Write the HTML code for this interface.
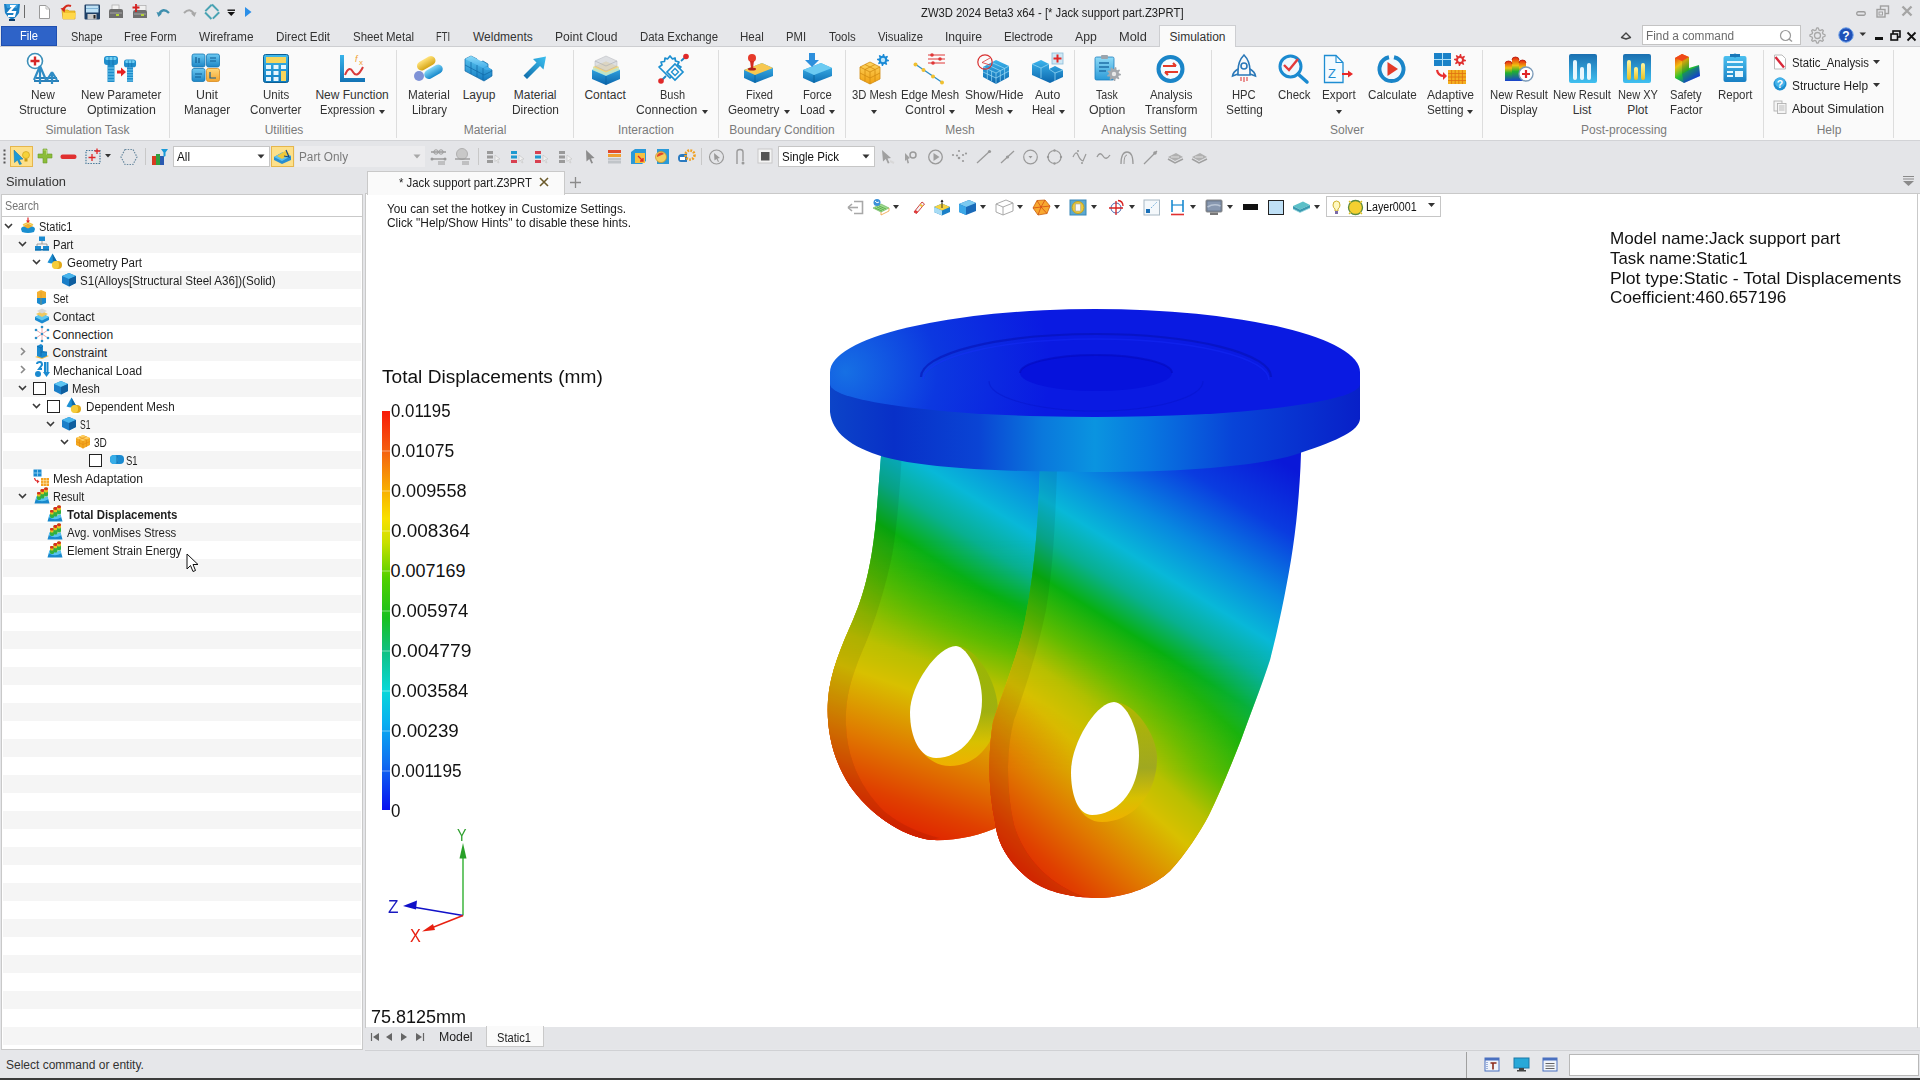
<!DOCTYPE html>
<html><head><meta charset="utf-8"><title>ZW3D</title><style>
*{margin:0;padding:0;box-sizing:border-box}
html,body{width:1920px;height:1080px;overflow:hidden;background:#e6e7ea;font-family:"Liberation Sans",sans-serif;font-size:12px;color:#222}
.a{position:absolute}
.t{position:absolute;white-space:nowrap}
svg.a{overflow:visible}
</style></head><body>
<div class="a" style="left:0px;top:0px;width:1920px;height:46px;background:#e6e7ea;"></div>
<div class="a" style="left:0px;top:46px;width:1920px;height:95px;background:#fafafa;border-top:1px solid #cdced1;border-bottom:1px solid #d2d3d6;"></div>
<div class="a" style="left:0px;top:141px;width:1920px;height:31px;background:#e4e5e8;"></div>
<div class="a" style="left:0px;top:172px;width:1920px;height:877px;background:#e4e5e8;"></div>
<div class="a" style="left:1px;top:216px;width:362px;height:834px;background:#fff;border:1px solid #c9c9c9;"></div>
<div class="a" style="left:365px;top:193px;width:1555px;height:835px;background:#fff;border-left:1px solid #c9c9c9;border-top:1px solid #c9c9c9;"></div>
<div class="a" style="left:0px;top:1050px;width:1920px;height:28px;background:#e6e7ea;"></div>
<div class="a" style="left:0px;top:1078px;width:1920px;height:2px;background:#3c3c3c;"></div>
<svg class="a" style="left:3px;top:2px;" width="18" height="19" viewBox="0 0 18 19"><path d="M1 2 L17 2 L16 11 Q13 16 9 18 Q5 16 2 11 Z" fill="#1a7fc4"/>
<path d="M3 2 L15 2 L14 6 L4 6Z" fill="#3ba0e0"/>
<path d="M7 4 L11 4 L6 10 L12 10 L11 14 L5 14" fill="none" stroke="#fff" stroke-width="2.2"/>
<rect x="6" y="17" width="6" height="2" fill="#0b3d6b"/></svg>
<div class="a" style="left:24px;top:5px;width:1px;height:13px;background:#6a6a6a;"></div>
<svg class="a" style="left:38px;top:4px;" width="13" height="16" viewBox="0 0 13 16"><path d="M1.5 1.5 H8 L11.5 5 V14.5 H1.5Z" fill="#fff" stroke="#9a9a9a"/><path d="M8 1.5 V5 H11.5" fill="none" stroke="#bbb"/></svg>
<svg class="a" style="left:60px;top:3px;" width="18" height="17" viewBox="0 0 18 17"><path d="M2 7 H8 L9 8 H15 V16 H3Z" fill="#f2c12e" stroke="#d9a520" stroke-width="0.8"/><path d="M3 10 H16 L14.5 16 H3Z" fill="#ffd84a"/><path d="M11 3 Q6 1 3 7" fill="none" stroke="#d42b1e" stroke-width="2"/><path d="M0.5 5.5 L4.5 9.5 L5.5 4Z" fill="#d42b1e"/></svg>
<svg class="a" style="left:84px;top:4px;" width="17" height="16" viewBox="0 0 17 16"><rect x="0.5" y="0.5" width="15.5" height="15" rx="1" fill="#1d3f66"/><rect x="2" y="1.5" width="12.5" height="7" fill="#bde0f5"/><rect x="2" y="4" width="12.5" height="1" fill="#7fb3d6"/><rect x="3.5" y="10" width="9" height="5.5" fill="#c9c9c9"/><rect x="9.5" y="11" width="2" height="3.5" fill="#222"/></svg>
<svg class="a" style="left:108px;top:4px;" width="16" height="16" viewBox="0 0 16 16"><rect x="4" y="1" width="7" height="5" fill="#f2f2f2" stroke="#aaa" stroke-width="0.7"/><path d="M1 7 Q1 5 3 5 H13 Q15 5 15 7 V14 H1Z" fill="#6f6f6f"/><rect x="2" y="8" width="12" height="2" fill="#8a8a8a"/><rect x="8" y="10" width="3" height="2" fill="#b6d43a"/></svg>
<svg class="a" style="left:132px;top:4px;" width="16" height="16" viewBox="0 0 16 16"><rect x="5" y="1.5" width="9" height="5" fill="#f0f0f0" stroke="#aaa" stroke-width="0.7"/><path d="M1 8 Q1 6 3 6 H13 Q15 6 15 8 V14 H1Z" fill="#6f6f6f"/><rect x="2" y="9" width="12" height="2" fill="#8a8a8a"/><rect x="9" y="10" width="3" height="2" fill="#b6d43a"/><path d="M4 0 V8 M0.5 3.5 H7.5" stroke="#d52020" stroke-width="1.8"/></svg>
<svg class="a" style="left:156px;top:6px;" width="16" height="12" viewBox="0 0 16 12"><path d="M3 8 Q7 1 13 7" fill="none" stroke="#3f8fae" stroke-width="2.3"/><path d="M0.5 6 L6 7.5 L2.5 11Z" fill="#3f8fae"/></svg>
<svg class="a" style="left:181px;top:6px;" width="16" height="12" viewBox="0 0 16 12"><path d="M13 8 Q9 1 3 7" fill="none" stroke="#a8a8a8" stroke-width="2"/><path d="M15.5 6 L10 7.5 L13.5 11Z" fill="#a8a8a8"/></svg>
<svg class="a" style="left:203px;top:3px;" width="18" height="18" viewBox="0 0 18 18"><path d="M9 1.5 L16.5 9 L9 16.5 L1.5 9Z" fill="none" stroke="#4aa3b3" stroke-width="2" stroke-dasharray="9 2"/></svg>
<svg class="a" style="left:227px;top:9px;" width="9" height="8" viewBox="0 0 9 8"><rect x="0.5" y="0.5" width="7.5" height="1.4" fill="#111"/><path d="M0.5 3 H8 L4.25 7Z" fill="#111"/></svg>
<svg class="a" style="left:244px;top:6px;" width="8" height="12" viewBox="0 0 8 12"><path d="M1 1 L7.5 6 L1 11Z" fill="#2b8fe8"/></svg>
<div class="t" style="left:920.5px;top:5.8px;font-size:12px;line-height:14px;color:#222;transform:scaleX(0.938);transform-origin:0 0;">ZW3D 2024 Beta3 x64 - [* Jack support part.Z3PRT]</div>
<svg class="a" style="left:1856px;top:11px;" width="11" height="6" viewBox="0 0 11 6"><rect x="0.75" y="0.75" width="8.5" height="3.5" rx="1.5" fill="none" stroke="#9c9c9c" stroke-width="1.3"/></svg>
<svg class="a" style="left:1876px;top:5px;" width="14" height="13" viewBox="0 0 14 13"><rect x="4.5" y="1" width="8" height="7.5" fill="none" stroke="#a0a0a0" stroke-width="1.4"/><rect x="1" y="4.5" width="8" height="7.5" fill="#e6e7ea" stroke="#a0a0a0" stroke-width="1.4"/><rect x="3" y="7" width="3.5" height="3" fill="none" stroke="#a0a0a0"/></svg>
<svg class="a" style="left:1901px;top:5px;" width="12" height="12" viewBox="0 0 12 12"><path d="M1.5 1.5 L10.5 10.5 M10.5 1.5 L1.5 10.5" stroke="#a5a5a5" stroke-width="2.4"/></svg>
<div class="a" style="left:1px;top:26px;width:56px;height:20px;background:#2e63c8;border:1px solid #1f4fb0;"></div>
<div class="t" style="left:19.5px;top:28.8px;font-size:12px;line-height:14px;color:#ffffff;transform:scaleX(0.931);transform-origin:0 0;">File</div>
<div class="a" style="left:1159px;top:25px;width:77px;height:22px;background:#fafafa;border:1px solid #cdced1;border-bottom:none;"></div>
<div class="t" style="left:70.5px;top:29.8px;font-size:12px;line-height:14px;color:#333;transform:scaleX(0.908);transform-origin:0 0;">Shape</div>
<div class="t" style="left:124.0px;top:29.8px;font-size:12px;line-height:14px;color:#333;transform:scaleX(0.938);transform-origin:0 0;">Free Form</div>
<div class="t" style="left:199.0px;top:29.8px;font-size:12px;line-height:14px;color:#333;transform:scaleX(0.985);transform-origin:0 0;">Wireframe</div>
<div class="t" style="left:276.0px;top:29.8px;font-size:12px;line-height:14px;color:#333;transform:scaleX(0.976);transform-origin:0 0;">Direct Edit</div>
<div class="t" style="left:352.5px;top:29.8px;font-size:12px;line-height:14px;color:#333;transform:scaleX(0.953);transform-origin:0 0;">Sheet Metal</div>
<div class="t" style="left:436.0px;top:29.8px;font-size:12px;line-height:14px;color:#333;transform:scaleX(0.778);transform-origin:0 0;">FTI</div>
<div class="t" style="left:473.0px;top:29.8px;font-size:12px;line-height:14px;color:#333;">Weldments</div>
<div class="t" style="left:555.0px;top:29.8px;font-size:12px;line-height:14px;color:#333;transform:scaleX(1.008);transform-origin:0 0;">Point Cloud</div>
<div class="t" style="left:640.0px;top:29.8px;font-size:12px;line-height:14px;color:#333;transform:scaleX(0.951);transform-origin:0 0;">Data Exchange</div>
<div class="t" style="left:740.0px;top:29.8px;font-size:12px;line-height:14px;color:#333;transform:scaleX(0.962);transform-origin:0 0;">Heal</div>
<div class="t" style="left:786.0px;top:29.8px;font-size:12px;line-height:14px;color:#333;transform:scaleX(0.938);transform-origin:0 0;">PMI</div>
<div class="t" style="left:829.0px;top:29.8px;font-size:12px;line-height:14px;color:#333;transform:scaleX(0.955);transform-origin:0 0;">Tools</div>
<div class="t" style="left:878.0px;top:29.8px;font-size:12px;line-height:14px;color:#333;transform:scaleX(0.941);transform-origin:0 0;">Visualize</div>
<div class="t" style="left:945.0px;top:29.8px;font-size:12px;line-height:14px;color:#333;transform:scaleX(1.009);transform-origin:0 0;">Inquire</div>
<div class="t" style="left:1004.0px;top:29.8px;font-size:12px;line-height:14px;color:#333;transform:scaleX(0.967);transform-origin:0 0;">Electrode</div>
<div class="t" style="left:1075.0px;top:29.8px;font-size:12px;line-height:14px;color:#333;transform:scaleX(1.019);transform-origin:0 0;">App</div>
<div class="t" style="left:1119.0px;top:29.8px;font-size:12px;line-height:14px;color:#333;transform:scaleX(1.067);transform-origin:0 0;">Mold</div>
<div class="t" style="left:1169.5px;top:29.8px;font-size:12px;line-height:14px;color:#333;">Simulation</div>
<svg class="a" style="left:1620px;top:31px;" width="12" height="9" viewBox="0 0 12 9"><path d="M1.5 6.5 L6 2 L10.5 6.5 L6 8Z" fill="none" stroke="#444" stroke-width="1.4" stroke-linejoin="round"/></svg>
<div class="a" style="left:1642px;top:25px;width:159px;height:20px;background:#fff;border:1px solid #c4c4c4;"></div>
<div class="t" style="left:1645.5px;top:28.8px;font-size:12px;line-height:14px;color:#6b6b6b;transform:scaleX(0.985);transform-origin:0 0;">Find a command</div>
<svg class="a" style="left:1779px;top:29px;" width="15" height="14" viewBox="0 0 15 14"><circle cx="6.5" cy="6.5" r="5" fill="none" stroke="#9a9a9a" stroke-width="1.2"/><path d="M10 10 L13 12.5" stroke="#9a9a9a" stroke-width="1.5"/></svg>
<svg class="a" style="left:1809px;top:27px;" width="18" height="17" viewBox="0 0 18 17"><polygon points="16.06,7.76 16.06,9.24 13.86,10.13 13.44,11.14 14.37,13.32 13.32,14.37 11.14,13.44 10.13,13.86 9.24,16.06 7.76,16.06 6.87,13.86 5.86,13.44 3.68,14.37 2.63,13.32 3.56,11.14 3.14,10.13 0.94,9.24 0.94,7.76 3.14,6.87 3.56,5.86 2.63,3.68 3.68,2.63 5.86,3.56 6.87,3.14 7.76,0.94 9.24,0.94 10.13,3.14 11.14,3.56 13.32,2.63 14.37,3.68 13.44,5.86 13.86,6.87" fill="none" stroke="#a8a8a8" stroke-width="1.3" stroke-linejoin="round"/><circle cx="8.5" cy="8.5" r="3" fill="none" stroke="#a8a8a8" stroke-width="1.3"/></svg>
<svg class="a" style="left:1838px;top:27px;" width="17" height="16" viewBox="0 0 17 16"><circle cx="8" cy="8" r="7.2" fill="#2051b8" stroke="#6a9ee8" stroke-width="1"/><text x="8" y="12.5" font-size="12" font-weight="bold" fill="#fff" text-anchor="middle" font-family="Liberation Sans">?</text></svg>
<svg class="a" style="left:1859px;top:32px;" width="8" height="5" viewBox="0 0 8 5"><path d="M0.5 0.5 H7 L3.75 4Z" fill="#333"/></svg>
<div class="a" style="left:1875px;top:37px;width:8px;height:3px;background:#111;"></div>
<svg class="a" style="left:1890px;top:30px;" width="11" height="11" viewBox="0 0 11 11"><rect x="3" y="1" width="7" height="6" fill="none" stroke="#111" stroke-width="1.6"/><rect x="1" y="4" width="6.5" height="6" fill="#e6e7ea" stroke="#111" stroke-width="1.6"/></svg>
<svg class="a" style="left:1906px;top:31px;" width="11" height="11" viewBox="0 0 11 11"><path d="M1.5 1.5 L9.5 9.5 M9.5 1.5 L1.5 9.5" stroke="#111" stroke-width="1.8"/></svg>
<div class="a" style="left:169px;top:50px;width:1px;height:88px;background:#dddddd;"></div>
<div class="a" style="left:396px;top:50px;width:1px;height:88px;background:#dddddd;"></div>
<div class="a" style="left:573px;top:50px;width:1px;height:88px;background:#dddddd;"></div>
<div class="a" style="left:718px;top:50px;width:1px;height:88px;background:#dddddd;"></div>
<div class="a" style="left:845px;top:50px;width:1px;height:88px;background:#dddddd;"></div>
<div class="a" style="left:1074px;top:50px;width:1px;height:88px;background:#dddddd;"></div>
<div class="a" style="left:1211px;top:50px;width:1px;height:88px;background:#dddddd;"></div>
<div class="a" style="left:1482px;top:50px;width:1px;height:88px;background:#dddddd;"></div>
<div class="a" style="left:1763px;top:50px;width:1px;height:88px;background:#dddddd;"></div>
<div class="a" style="left:1893px;top:50px;width:1px;height:88px;background:#dddddd;"></div>
<div class="t" style="left:31.1px;top:87.8px;font-size:12px;line-height:14px;color:#333;transform:scaleX(0.989);transform-origin:0 0;">New</div>
<div class="t" style="left:19.2px;top:102.8px;font-size:12px;line-height:14px;color:#333;transform:scaleX(0.976);transform-origin:0 0;">Structure</div>
<div class="t" style="left:80.9px;top:87.8px;font-size:12px;line-height:14px;color:#333;transform:scaleX(0.963);transform-origin:0 0;">New Parameter</div>
<div class="t" style="left:86.6px;top:102.8px;font-size:12px;line-height:14px;color:#333;transform:scaleX(1.031);transform-origin:0 0;">Optimization</div>
<div class="t" style="left:196.0px;top:87.8px;font-size:12px;line-height:14px;color:#333;transform:scaleX(1.031);transform-origin:0 0;">Unit</div>
<div class="t" style="left:183.9px;top:102.8px;font-size:12px;line-height:14px;color:#333;transform:scaleX(0.977);transform-origin:0 0;">Manager</div>
<div class="t" style="left:262.9px;top:87.8px;font-size:12px;line-height:14px;color:#333;transform:scaleX(0.960);transform-origin:0 0;">Units</div>
<div class="t" style="left:250.4px;top:102.8px;font-size:12px;line-height:14px;color:#333;transform:scaleX(0.973);transform-origin:0 0;">Converter</div>
<div class="t" style="left:315.4px;top:87.8px;font-size:12px;line-height:14px;color:#333;">New Function</div>
<div class="t" style="left:319.5px;top:102.8px;font-size:12px;line-height:14px;color:#333;transform:scaleX(0.927);transform-origin:0 0;">Expression</div>
<svg class="a" style="left:378.5px;top:110px;" width="6" height="4" viewBox="0 0 6 4"><path d="M0 0 H6 L3 4Z" fill="#333"/></svg>
<div class="t" style="left:408.1px;top:87.8px;font-size:12px;line-height:14px;color:#333;transform:scaleX(0.978);transform-origin:0 0;">Material</div>
<div class="t" style="left:411.5px;top:102.8px;font-size:12px;line-height:14px;color:#333;transform:scaleX(0.954);transform-origin:0 0;">Library</div>
<div class="t" style="left:462.7px;top:87.8px;font-size:12px;line-height:14px;color:#333;">Layup</div>
<div class="t" style="left:513.8px;top:87.8px;font-size:12px;line-height:14px;color:#333;">Material</div>
<div class="t" style="left:511.5px;top:102.8px;font-size:12px;line-height:14px;color:#333;transform:scaleX(0.992);transform-origin:0 0;">Direction</div>
<div class="t" style="left:584.4px;top:87.8px;font-size:12px;line-height:14px;color:#333;">Contact</div>
<div class="t" style="left:659.5px;top:87.8px;font-size:12px;line-height:14px;color:#333;transform:scaleX(0.914);transform-origin:0 0;">Bush</div>
<div class="t" style="left:636.4px;top:102.8px;font-size:12px;line-height:14px;color:#333;transform:scaleX(1.009);transform-origin:0 0;">Connection</div>
<svg class="a" style="left:701.625px;top:110px;" width="6" height="4" viewBox="0 0 6 4"><path d="M0 0 H6 L3 4Z" fill="#333"/></svg>
<div class="t" style="left:745.5px;top:87.8px;font-size:12px;line-height:14px;color:#333;transform:scaleX(0.920);transform-origin:0 0;">Fixed</div>
<div class="t" style="left:728.4px;top:102.8px;font-size:12px;line-height:14px;color:#333;transform:scaleX(0.973);transform-origin:0 0;">Geometry</div>
<svg class="a" style="left:783.625px;top:110px;" width="6" height="4" viewBox="0 0 6 4"><path d="M0 0 H6 L3 4Z" fill="#333"/></svg>
<div class="t" style="left:802.6px;top:87.8px;font-size:12px;line-height:14px;color:#333;transform:scaleX(0.937);transform-origin:0 0;">Force</div>
<div class="t" style="left:799.5px;top:102.8px;font-size:12px;line-height:14px;color:#333;transform:scaleX(0.937);transform-origin:0 0;">Load</div>
<svg class="a" style="left:828.5px;top:110px;" width="6" height="4" viewBox="0 0 6 4"><path d="M0 0 H6 L3 4Z" fill="#333"/></svg>
<div class="t" style="left:851.5px;top:87.8px;font-size:12px;line-height:14px;color:#333;transform:scaleX(0.937);transform-origin:0 0;">3D Mesh</div>
<svg class="a" style="left:871px;top:110px;" width="6" height="4" viewBox="0 0 6 4"><path d="M0 0 H6 L3 4Z" fill="#333"/></svg>
<div class="t" style="left:901.0px;top:87.8px;font-size:12px;line-height:14px;color:#333;transform:scaleX(0.956);transform-origin:0 0;">Edge Mesh</div>
<div class="t" style="left:905.0px;top:102.8px;font-size:12px;line-height:14px;color:#333;transform:scaleX(1.034);transform-origin:0 0;">Control</div>
<svg class="a" style="left:949.0px;top:110px;" width="6" height="4" viewBox="0 0 6 4"><path d="M0 0 H6 L3 4Z" fill="#333"/></svg>
<div class="t" style="left:964.8px;top:87.8px;font-size:12px;line-height:14px;color:#333;transform:scaleX(1.008);transform-origin:0 0;">Show/Hide</div>
<div class="t" style="left:974.9px;top:102.8px;font-size:12px;line-height:14px;color:#333;transform:scaleX(0.963);transform-origin:0 0;">Mesh</div>
<svg class="a" style="left:1007.125px;top:110px;" width="6" height="4" viewBox="0 0 6 4"><path d="M0 0 H6 L3 4Z" fill="#333"/></svg>
<div class="t" style="left:1035.4px;top:87.8px;font-size:12px;line-height:14px;color:#333;transform:scaleX(1.023);transform-origin:0 0;">Auto</div>
<div class="t" style="left:1031.5px;top:102.8px;font-size:12px;line-height:14px;color:#333;transform:scaleX(0.932);transform-origin:0 0;">Heal</div>
<svg class="a" style="left:1058.5px;top:110px;" width="6" height="4" viewBox="0 0 6 4"><path d="M0 0 H6 L3 4Z" fill="#333"/></svg>
<div class="t" style="left:1096.1px;top:87.8px;font-size:12px;line-height:14px;color:#333;transform:scaleX(0.882);transform-origin:0 0;">Task</div>
<div class="t" style="left:1088.9px;top:102.8px;font-size:12px;line-height:14px;color:#333;transform:scaleX(1.026);transform-origin:0 0;">Option</div>
<div class="t" style="left:1149.8px;top:87.8px;font-size:12px;line-height:14px;color:#333;transform:scaleX(0.951);transform-origin:0 0;">Analysis</div>
<div class="t" style="left:1144.8px;top:102.8px;font-size:12px;line-height:14px;color:#333;transform:scaleX(0.968);transform-origin:0 0;">Transform</div>
<div class="t" style="left:1232.1px;top:87.8px;font-size:12px;line-height:14px;color:#333;transform:scaleX(0.937);transform-origin:0 0;">HPC</div>
<div class="t" style="left:1225.6px;top:102.8px;font-size:12px;line-height:14px;color:#333;transform:scaleX(0.984);transform-origin:0 0;">Setting</div>
<div class="t" style="left:1277.8px;top:87.8px;font-size:12px;line-height:14px;color:#333;transform:scaleX(0.955);transform-origin:0 0;">Check</div>
<div class="t" style="left:1322.1px;top:87.8px;font-size:12px;line-height:14px;color:#333;transform:scaleX(0.973);transform-origin:0 0;">Export</div>
<svg class="a" style="left:1336px;top:110px;" width="6" height="4" viewBox="0 0 6 4"><path d="M0 0 H6 L3 4Z" fill="#333"/></svg>
<div class="t" style="left:1367.6px;top:87.8px;font-size:12px;line-height:14px;color:#333;transform:scaleX(0.974);transform-origin:0 0;">Calculate</div>
<div class="t" style="left:1426.5px;top:87.8px;font-size:12px;line-height:14px;color:#333;transform:scaleX(1.007);transform-origin:0 0;">Adaptive</div>
<div class="t" style="left:1426.8px;top:102.8px;font-size:12px;line-height:14px;color:#333;transform:scaleX(0.977);transform-origin:0 0;">Setting</div>
<svg class="a" style="left:1467.25px;top:110px;" width="6" height="4" viewBox="0 0 6 4"><path d="M0 0 H6 L3 4Z" fill="#333"/></svg>
<div class="t" style="left:1490.0px;top:87.8px;font-size:12px;line-height:14px;color:#333;transform:scaleX(0.945);transform-origin:0 0;">New Result</div>
<div class="t" style="left:1500.2px;top:102.8px;font-size:12px;line-height:14px;color:#333;transform:scaleX(0.953);transform-origin:0 0;">Display</div>
<div class="t" style="left:1553.0px;top:87.8px;font-size:12px;line-height:14px;color:#333;transform:scaleX(0.945);transform-origin:0 0;">New Result</div>
<div class="t" style="left:1572.7px;top:102.8px;font-size:12px;line-height:14px;color:#333;">List</div>
<div class="t" style="left:1617.5px;top:87.8px;font-size:12px;line-height:14px;color:#333;transform:scaleX(0.923);transform-origin:0 0;">New XY</div>
<div class="t" style="left:1627.2px;top:102.8px;font-size:12px;line-height:14px;color:#333;">Plot</div>
<div class="t" style="left:1670.2px;top:87.8px;font-size:12px;line-height:14px;color:#333;transform:scaleX(0.926);transform-origin:0 0;">Safety</div>
<div class="t" style="left:1669.8px;top:102.8px;font-size:12px;line-height:14px;color:#333;transform:scaleX(0.956);transform-origin:0 0;">Factor</div>
<div class="t" style="left:1717.8px;top:87.8px;font-size:12px;line-height:14px;color:#333;transform:scaleX(0.958);transform-origin:0 0;">Report</div>
<div class="t" style="left:45.6px;top:122.8px;font-size:12px;line-height:14px;color:#7b7b7b;">Simulation Task</div>
<div class="t" style="left:264.7px;top:122.8px;font-size:12px;line-height:14px;color:#7b7b7b;">Utilities</div>
<div class="t" style="left:463.7px;top:122.8px;font-size:12px;line-height:14px;color:#7b7b7b;">Material</div>
<div class="t" style="left:618.0px;top:122.8px;font-size:12px;line-height:14px;color:#7b7b7b;">Interaction</div>
<div class="t" style="left:729.3px;top:122.8px;font-size:12px;line-height:14px;color:#7b7b7b;">Boundary Condition</div>
<div class="t" style="left:945.3px;top:122.8px;font-size:12px;line-height:14px;color:#7b7b7b;">Mesh</div>
<div class="t" style="left:1101.3px;top:122.8px;font-size:12px;line-height:14px;color:#7b7b7b;">Analysis Setting</div>
<div class="t" style="left:1330.0px;top:122.8px;font-size:12px;line-height:14px;color:#7b7b7b;">Solver</div>
<div class="t" style="left:1581.0px;top:122.8px;font-size:12px;line-height:14px;color:#7b7b7b;">Post-processing</div>
<div class="t" style="left:1816.7px;top:122.8px;font-size:12px;line-height:14px;color:#7b7b7b;">Help</div>
<svg class="a" style="left:1773px;top:54px;" width="14" height="16" viewBox="0 0 14 16"><path d="M1.5 1 H9 L12.5 4.5 V15 H1.5Z" fill="#fff" stroke="#bbb"/><path d="M2.5 3 L11 13.5" stroke="#d8283a" stroke-width="2.4"/></svg>
<div class="t" style="left:1792.0px;top:55.8px;font-size:12px;line-height:14px;color:#222;transform:scaleX(0.946);transform-origin:0 0;">Static_Analysis</div>
<svg class="a" style="left:1873px;top:60px;" width="7" height="4" viewBox="0 0 7 4"><path d="M0 0 H7 L3.5 4Z" fill="#333"/></svg>
<svg class="a" style="left:1773px;top:77px;" width="14" height="14" viewBox="0 0 14 14"><circle cx="7" cy="7" r="6.5" fill="#1e8fd0"/><circle cx="7" cy="5.5" r="5" fill="#45b3ea"/><text x="7" y="11" font-size="10.5" font-weight="bold" fill="#fff" text-anchor="middle" font-family="Liberation Sans">?</text></svg>
<div class="t" style="left:1792.0px;top:78.8px;font-size:12px;line-height:14px;color:#222;transform:scaleX(0.991);transform-origin:0 0;">Structure Help</div>
<svg class="a" style="left:1873px;top:83px;" width="7" height="4" viewBox="0 0 7 4"><path d="M0 0 H7 L3.5 4Z" fill="#333"/></svg>
<svg class="a" style="left:1773px;top:100px;" width="14" height="14" viewBox="0 0 14 14"><rect x="1" y="1" width="8" height="10" fill="#f4f4f4" stroke="#aaa" stroke-width="0.8"/><rect x="4.5" y="3.5" width="8.5" height="10" fill="#f4f4f4" stroke="#aaa" stroke-width="0.8"/><path d="M6 6 H11.5 M6 8 H11.5 M6 10 H11.5" stroke="#bbb"/></svg>
<div class="t" style="left:1792.0px;top:101.8px;font-size:12px;line-height:14px;color:#222;transform:scaleX(1.014);transform-origin:0 0;">About Simulation</div>
<svg class="a" style="left:26px;top:52px;" width="36" height="34" viewBox="0 0 36 34"><circle cx="9" cy="9" r="7.5" fill="#fff" stroke="#3d8fb8" stroke-width="1.6"/>
<path d="M9 4.5 V13.5 M4.5 9 H13.5" stroke="#d62828" stroke-width="2.4"/>
<path d="M8 29 L33 29 M10 26 L31 26" stroke="#2a7fb8" stroke-width="2"/>
<path d="M14 14 V32 M26 20 V32 M14 14 L8 28 M14 14 L20 28 M26 20 L21 28 M26 20 L31 28" stroke="#2f8cc4" stroke-width="2.2" fill="none"/></svg>
<svg class="a" style="left:104px;top:55px;" width="34" height="28" viewBox="0 0 34 28"><g transform="translate(0,1) scale(1)"><rect x="0" y="0" width="14" height="9" rx="3" fill="#1f8dcb"/><rect x="1.5" y="1" width="11" height="3" rx="1.5" fill="#6fd0f5"/><path d="M5 1 V9 M9 1 V9" stroke="#0f6aa8" stroke-width="0.7"/>
<rect x="3.5" y="9" width="7" height="17" fill="#1f8dcb"/><path d="M3.5 12 H10.5 M3.5 15 H10.5 M3.5 18 H10.5 M3.5 21 H10.5 M3.5 24 H10.5" stroke="#7fd3f3" stroke-width="0.9"/></g><g transform="translate(20,4.5) scale(0.86)"><rect x="0" y="0" width="14" height="9" rx="3" fill="#1f8dcb"/><rect x="1.5" y="1" width="11" height="3" rx="1.5" fill="#6fd0f5"/><path d="M5 1 V9 M9 1 V9" stroke="#0f6aa8" stroke-width="0.7"/>
<rect x="3.5" y="9" width="7" height="17" fill="#1f8dcb"/><path d="M3.5 12 H10.5 M3.5 15 H10.5 M3.5 18 H10.5 M3.5 21 H10.5 M3.5 24 H10.5" stroke="#7fd3f3" stroke-width="0.9"/></g><path d="M13 17 H18" stroke="#e82020" stroke-width="3"/><path d="M17 12.5 L22 17 L17 21.5Z" fill="#e82020"/></svg>
<svg class="a" style="left:191px;top:53px;" width="30" height="30" viewBox="0 0 30 30"><linearGradient id="um1" x1="0" y1="0" x2="0" y2="1"><stop offset="0" stop-color="#6cc9f2"/><stop offset="1" stop-color="#1d86c6"/></linearGradient><linearGradient id="um2" x1="0" y1="0" x2="0" y2="1"><stop offset="0" stop-color="#ffd87a"/><stop offset="1" stop-color="#f2a530"/></linearGradient>
<rect x="1" y="1" width="13" height="13" rx="2" fill="url(#um1)" stroke="#1577b3" stroke-width="0.8"/>
<rect x="15.5" y="1" width="13" height="13" rx="2" fill="url(#um1)" stroke="#1577b3" stroke-width="0.8"/>
<rect x="1" y="15.5" width="13" height="13" rx="2" fill="url(#um1)" stroke="#1577b3" stroke-width="0.8"/>
<rect x="15.5" y="15.5" width="13" height="13" rx="2" fill="url(#um2)" stroke="#d98a1c" stroke-width="0.8"/>
<path d="M5 4 V10 M8 5 V10 M19 5 H25 M19 8 H25 M4 21 H11 M4 24 H10 M19 19 V25 H25" stroke="#0f5d93" stroke-width="1.2" fill="none"/></svg>
<svg class="a" style="left:263px;top:54px;" width="27" height="30" viewBox="0 0 27 30"><linearGradient id="uc" x1="0" y1="0" x2="0" y2="1"><stop offset="0" stop-color="#40b8ea"/><stop offset="1" stop-color="#0f7cc0"/></linearGradient><rect x="0.5" y="0.5" width="25" height="28" rx="2" fill="url(#uc)" stroke="#0b5f95"/>
<rect x="3" y="3" width="20" height="6" fill="#f6d55c"/>
<g fill="#e6f6fd"><rect x="3" y="11" width="5" height="4"/><rect x="10.5" y="11" width="5" height="4"/><rect x="18" y="11" width="5" height="4"/>
<rect x="3" y="17" width="5" height="4"/><rect x="10.5" y="17" width="5" height="4"/><rect x="3" y="23" width="5" height="4"/><rect x="10.5" y="23" width="5" height="4"/></g>
<rect x="18" y="17" width="5" height="10" fill="#f6d55c"/></svg>
<svg class="a" style="left:339px;top:53px;" width="28" height="30" viewBox="0 0 28 30"><linearGradient id="nf" x1="0" y1="0" x2="0" y2="1"><stop offset="0" stop-color="#38b3ea"/><stop offset="1" stop-color="#1273b5"/></linearGradient><path d="M1 27 H26 V29 H1Z" fill="#59c4f0"/><path d="M1 2 H5 V25 H26 V29 H1Z" fill="url(#nf)"/>
<path d="M6 22 Q10 12 14 19 Q18 26 24 14" fill="none" stroke="#d83a3a" stroke-width="2"/>
<text x="16" y="9" font-size="9" fill="#f0a030" font-family="Liberation Sans" font-style="italic">f</text><text x="20" y="12" font-size="8" fill="#f0a030" font-family="Liberation Sans">x</text></svg>
<svg class="a" style="left:413px;top:55px;" width="32" height="27" viewBox="0 0 32 27"><linearGradient id="ml1" x1="0" y1="0" x2="0" y2="1"><stop offset="0" stop-color="#ffe27a"/><stop offset="1" stop-color="#d6a514"/></linearGradient><linearGradient id="ml2" x1="0" y1="0" x2="0" y2="1"><stop offset="0" stop-color="#7fd6f7"/><stop offset="1" stop-color="#1688cb"/></linearGradient>
<g transform="rotate(-30 16 13)"><rect x="6" y="3" width="20" height="9" rx="4.5" fill="url(#ml1)"/><rect x="8" y="14" width="20" height="9" rx="4.5" fill="url(#ml2)"/></g>
<circle cx="6" cy="21" r="5" fill="#7e92d6"/></svg>
<svg class="a" style="left:464px;top:54px;" width="30" height="28" viewBox="0 0 30 28"><linearGradient id="ly" x1="0" y1="0" x2="0" y2="1"><stop offset="0" stop-color="#5cc8f2"/><stop offset="1" stop-color="#137ac0"/></linearGradient><linearGradient id="lyt" x1="0" y1="0" x2="0" y2="1"><stop offset="0" stop-color="#8adaf8"/><stop offset="1" stop-color="#3aa8e8"/></linearGradient>
<path d="M1 5 L7 2 L13 5 V9 L19 7 L24 10 V14 L28 16 V22 L20 27 L1 17Z" fill="url(#ly)" stroke="#0e65a3" stroke-width="0.7"/>
<path d="M1 5 L7 8 L13 5 L7 2Z M7 8 L13 11 L19 8 L13 5Z M13 11 L19 14 L24 11 L19 8Z M19 14 L22 16 L28 16 L24 13Z" fill="url(#lyt)"/>
<path d="M7 8 V20 M13 11 V23 M19 14 V26 M1 11 L20 21 L28 17" stroke="#0e65a3" stroke-width="0.7" fill="none"/></svg>
<svg class="a" style="left:522px;top:55px;" width="26" height="26" viewBox="0 0 26 26"><linearGradient id="md" x1="0" y1="1" x2="1" y2="0"><stop offset="0" stop-color="#0f6aa8"/><stop offset="1" stop-color="#3cc0f0"/></linearGradient><path d="M1.5 20.5 L14.5 7.5 L11 4 L24 1.5 L21.5 14.5 L18 11 L5 24Z" fill="url(#md)"/></svg>
<svg class="a" style="left:590px;top:53px;" width="32" height="32" viewBox="0 0 32 32"><linearGradient id="ct1" x1="0" y1="0" x2="0" y2="1"><stop offset="0" stop-color="#3cb4ec"/><stop offset="1" stop-color="#0b66ad"/></linearGradient><path d="M2 17 L16 11 L30 17 V26 L16 32 L2 26Z" fill="url(#ct1)"/><path d="M2 17 L16 23 L30 17 L16 11Z" fill="#7ed6f7"/><path d="M16 23 V32" stroke="#0a5a98" stroke-width="0.6"/>
<path d="M3 14 L16 8.5 L29 14 V17 L16 22.5 L3 17Z" fill="#c8e4c0" opacity="0.9"/><path d="M3 14 L16 19.5 L29 14 L16 8.5Z" fill="#f6d47a"/>
<path d="M5 8 L16 3 L27 8 V13 L16 18 L5 13Z" fill="#d4d6da" opacity="0.75" stroke="#a8abb2" stroke-width="0.6"/><path d="M5 8 L16 13 L27 8" fill="none" stroke="#a8abb2" stroke-width="0.6"/></svg>
<svg class="a" style="left:656px;top:53px;" width="34" height="32" viewBox="0 0 34 32"><path d="M5 28 L10 23 M25 8 L30 3.5" stroke="#1c86c6" stroke-width="1.8"/><circle cx="5" cy="28" r="2.8" fill="#e02828"/><circle cx="30" cy="3.5" r="2.8" fill="#e02828"/>
<path d="M14 3 L16.5 6 L19 5 L19.5 8 L23 9 L21.5 12 L25 14 L14 25 L3 14 L6 12 L5 9 L8.5 8.5 L9 5 L11.5 6Z" fill="none" stroke="#1c8fd0" stroke-width="1.7" stroke-linejoin="round"/>
<path d="M19 11 L27 19 L19 27 L11 19Z" fill="#fafafa" stroke="#1c8fd0" stroke-width="1.7"/><path d="M19 15.5 L22.5 19 L19 22.5 L15.5 19Z" fill="none" stroke="#1c8fd0" stroke-width="1.3"/></svg>
<svg class="a" style="left:743px;top:53px;" width="31" height="29" viewBox="0 0 31 29"><linearGradient id="fg" x1="0" y1="0" x2="0" y2="1"><stop offset="0" stop-color="#43b9ee"/><stop offset="1" stop-color="#0d6fb5"/></linearGradient><path d="M1 17 L19 10 L30 15 V23 L12 30 L1 25Z" fill="url(#fg)"/><path d="M1 17 L12 22 L30 15 L19 10Z" fill="#f7c850"/><path d="M12 22 V30" stroke="#0b5f95" stroke-width="0.8"/>
<circle cx="9" cy="5" r="4" fill="#e63a2a"/><path d="M7 8 L11 8 L10 15 L8 15Z" fill="#d42a20"/><ellipse cx="9" cy="16" rx="4" ry="1.5" fill="#b02018"/></svg>
<svg class="a" style="left:802px;top:52px;" width="32" height="30" viewBox="0 0 32 30"><linearGradient id="fl" x1="0" y1="0" x2="0" y2="1"><stop offset="0" stop-color="#43b9ee"/><stop offset="1" stop-color="#0d6fb5"/></linearGradient><path d="M1 18 L19 11 L30 16 V24 L12 31 L1 26Z" fill="url(#fl)"/><path d="M1 18 L12 23 L30 16 L19 11Z" fill="#6ccbf2"/><path d="M12 23 V31" stroke="#0b5f95" stroke-width="0.8"/>
<path d="M7 1 H13 V8 H17 L10 15 L3 8 H7Z" fill="#2d8fdc"/></svg>
<svg class="a" style="left:859px;top:53px;" width="31" height="32" viewBox="0 0 31 32"><linearGradient id="3d" x1="0" y1="0" x2="0" y2="1"><stop offset="0" stop-color="#ffd560"/><stop offset="1" stop-color="#f0a010"/></linearGradient><path d="M1 14 L11 9 L21 14 V26 L11 31 L1 26Z" fill="url(#3d)" stroke="#d08a10" stroke-width="0.8"/>
<path d="M1 14 L11 19 L21 14 M11 19 V31 M1 20 L11 25 L21 20 M6 11.5 L16 16.5 M16 11.5 L6 16.5 M6 16.5 V28.5 M16 16.5 V28.5" stroke="#d08a10" stroke-width="0.8" fill="none"/>
<polygon points="30.00,7.00 29.88,8.17 27.88,8.61 27.49,9.33 28.24,11.24 27.33,11.99 25.61,10.88 24.82,11.12 24.00,13.00 22.83,12.88 22.39,10.88 21.67,10.49 19.76,11.24 19.01,10.33 20.12,8.61 19.88,7.82 18.00,7.00 18.12,5.83 20.12,5.39 20.51,4.67 19.76,2.76 20.67,2.01 22.39,3.12 23.18,2.88 24.00,1.00 25.17,1.12 25.61,3.12 26.33,3.51 28.24,2.76 28.99,3.67 27.88,5.39 28.12,6.18" fill="#1a8ad6"/><circle cx="24" cy="7" r="2.2" fill="#bfe6fa"/></svg>
<svg class="a" style="left:913px;top:53px;" width="33" height="32" viewBox="0 0 33 32"><path d="M2 11 L30 30" stroke="#2d8fc8" stroke-width="1.4"/><g fill="#f0c030"><circle cx="2.5" cy="11.5" r="2"/><circle cx="10.5" cy="17" r="2"/><circle cx="20" cy="23.5" r="2"/><circle cx="29" cy="29.5" r="2"/></g>
<path d="M15 2 H32 M15 6 H32 M15 10 H32" stroke="#e03838" stroke-width="1.2"/><g fill="#e03838"><circle cx="19" cy="2" r="1.8"/><circle cx="27" cy="6" r="1.8"/><circle cx="20" cy="10" r="1.8"/></g></svg>
<svg class="a" style="left:977px;top:53px;" width="33" height="31" viewBox="0 0 33 31"><linearGradient id="sh" x1="0" y1="0" x2="0" y2="1"><stop offset="0" stop-color="#3cb4ec"/><stop offset="1" stop-color="#0b66ad"/></linearGradient><path d="M6 14 L19 7 L32 13 V24 L19 31 L6 24Z" fill="url(#sh)"/>
<path d="M6 14 L19 20 L32 13 M19 20 V31 M6 19 L19 25 L32 18 M10.3 11.7 L23.3 17.7 M14.6 9.4 L27.6 15.4 M10.3 16 V26 M14.6 18 V28 M23.3 17.7 V28.7 M27.6 15.4 V26.4" stroke="#9fdcf7" stroke-width="0.7" fill="none"/>
<circle cx="8" cy="9" r="7.2" fill="none" stroke="#d83030" stroke-width="1.2"/><path d="M13 5 L5 9.5 L13 12" fill="none" stroke="#d83030" stroke-width="0.8"/></svg>
<svg class="a" style="left:1031px;top:52px;" width="34" height="31" viewBox="0 0 34 31"><linearGradient id="ah" x1="0" y1="0" x2="0" y2="1"><stop offset="0" stop-color="#3cb4ec"/><stop offset="1" stop-color="#0b66ad"/></linearGradient><path d="M1 12 L10 8 L18 12 V17 L24 14 L32 18 V25 L19 31 L1 23Z" fill="url(#ah)"/>
<path d="M1 12 L10 16 L18 12 M10 16 V26 M18 17 L24 21 L32 18 M24 21 V29" stroke="#9fdcf7" stroke-width="0.7" fill="none"/>
<rect x="21" y="1" width="11" height="11" fill="#cfe8f5" stroke="#8cbcd8" stroke-width="0.8"/><path d="M26.5 2.5 V10.5 M22.5 6.5 H30.5" stroke="#e02828" stroke-width="2"/></svg>
<svg class="a" style="left:1094px;top:54px;" width="28" height="28" viewBox="0 0 28 28"><linearGradient id="to" x1="0" y1="0" x2="0" y2="1"><stop offset="0" stop-color="#8fdbf7"/><stop offset="1" stop-color="#2a9ad8"/></linearGradient><rect x="1" y="3" width="19" height="23" rx="1.5" fill="url(#to)" stroke="#1b7cbc" stroke-width="0.8"/><rect x="7" y="1" width="7" height="4" rx="1" fill="#9aa4ad"/>
<path d="M5 9 H15 M5 13 H15 M5 17 H12" stroke="#1f6fa8" stroke-width="1.5"/>
<polygon points="27.00,20.00 26.89,21.22 24.70,21.71 24.33,22.50 25.36,24.50 24.50,25.36 22.50,24.33 21.71,24.70 21.22,26.89 20.00,27.00 19.13,24.92 18.29,24.70 16.50,26.06 15.50,25.36 16.17,23.21 15.67,22.50 13.42,22.39 13.11,21.22 15.00,20.00 15.08,19.13 13.42,17.61 13.94,16.50 16.17,16.79 16.79,16.17 16.50,13.94 17.61,13.42 19.13,15.08 20.00,15.00 21.22,13.11 22.39,13.42 22.50,15.67 23.21,16.17 25.36,15.50 26.06,16.50 24.70,18.29 24.92,19.13" fill="#a4a8ad"/><circle cx="20" cy="20" r="2.2" fill="#e8e8e8"/></svg>
<svg class="a" style="left:1156px;top:55px;" width="30" height="29" viewBox="0 0 30 29"><circle cx="14.5" cy="14" r="12" fill="#f4fbff" stroke="#1a85c8" stroke-width="4"/>
<path d="M7 11 H20 M20 11 L17 8 M22 17 H9 M9 17 L12 20" stroke="#e33a2a" stroke-width="2.2" fill="none"/></svg>
<svg class="a" style="left:1230px;top:54px;" width="28" height="29" viewBox="0 0 28 29"><path d="M14 1 Q20 7 20 17 L20 21 H8 V17 Q8 7 14 1Z" fill="none" stroke="#2a78b8" stroke-width="1.6"/><circle cx="14" cy="12" r="3" fill="none" stroke="#2a78b8" stroke-width="1.6"/>
<path d="M8 15 Q3 18 2.5 22 L8 20 M20 15 Q25 18 25.5 22 L20 20" fill="none" stroke="#2a78b8" stroke-width="1.6"/>
<path d="M11 23 V27 M14 23 V28 M17 23 V27" stroke="#e05050" stroke-width="1.2"/></svg>
<svg class="a" style="left:1278px;top:54px;" width="32" height="30" viewBox="0 0 32 30"><circle cx="12.5" cy="12.5" r="10.5" fill="#eef8fd" stroke="#1a8ad0" stroke-width="3"/><path d="M20 20 L29 28" stroke="#1a8ad0" stroke-width="3.5" stroke-linecap="round"/>
<path d="M6 11 L11 16 L20 5" fill="none" stroke="#e33a3a" stroke-width="2.4"/></svg>
<svg class="a" style="left:1323px;top:54px;" width="32" height="30" viewBox="0 0 32 30"><path d="M1.5 1.5 H13 L20 8.5 V28.5 H1.5Z" fill="#f4fbff" stroke="#1e8dd2" stroke-width="1.3"/><path d="M13 1.5 V8.5 H20" fill="none" stroke="#1e8dd2" stroke-width="1.1"/>
<text x="5" y="24" font-size="13" fill="#1e8dd2" font-family="Liberation Sans">Z</text><path d="M19 20 H26" stroke="#e82828" stroke-width="2"/><path d="M25 16.5 L30 20 L25 23.5Z" fill="#e82828"/></svg>
<svg class="a" style="left:1377px;top:55px;" width="30" height="28" viewBox="0 0 30 28"><circle cx="14.5" cy="14" r="12" fill="#f0f9ff"/><path d="M17 2.3 A12 12 0 1 1 12 2.3" fill="none" stroke="#1a85c8" stroke-width="4"/>
<path d="M10.5 7 L21 14 L10.5 21Z" fill="#e33a2a"/></svg>
<svg class="a" style="left:1433px;top:52px;" width="35" height="33" viewBox="0 0 35 33"><rect x="1" y="1" width="17" height="13" fill="#1a82c8"/><path d="M9.5 1 V14 M1 7.5 H18" stroke="#aee0f8" stroke-width="1"/>
<polygon points="33.00,8.00 32.88,9.17 30.70,9.53 30.33,10.22 31.24,12.24 30.33,12.99 28.53,11.70 27.78,11.92 27.00,14.00 25.83,13.88 25.47,11.70 24.78,11.33 22.76,12.24 22.01,11.33 23.30,9.53 23.08,8.78 21.00,8.00 21.12,6.83 23.30,6.47 23.67,5.78 22.76,3.76 23.67,3.01 25.47,4.30 26.22,4.08 27.00,2.00 28.17,2.12 28.53,4.30 29.22,4.67 31.24,3.76 31.99,4.67 30.70,6.47 30.92,7.22" fill="#e03030"/><circle cx="27" cy="8" r="2" fill="#fafafa"/>
<path d="M4 18 Q5 24 11 24" fill="none" stroke="#e83030" stroke-width="2.2"/><path d="M10 20 L14 24 L10 28Z" fill="#e83030"/>
<rect x="15" y="18" width="18" height="14" fill="#f4b020"/><path d="M18.6 18 V32 M22.2 18 V32 M25.8 18 V32 M29.4 18 V32 M15 21.5 H33 M15 25 H33 M15 28.5 H33" stroke="#e07010" stroke-width="0.8"/></svg>
<svg class="a" style="left:1504px;top:55px;" width="30" height="29" viewBox="0 0 30 29"><linearGradient id="nrd" x1="0" y1="0" x2="0" y2="1"><stop offset="0" stop-color="#e82010"/><stop offset="0.35" stop-color="#f0c010"/><stop offset="0.6" stop-color="#20b030"/><stop offset="1" stop-color="#1a40d0"/></linearGradient>
<path d="M1 9 Q1 6 4.5 6 Q8 6 8 9 V26 H1Z" fill="url(#nrd)"/><path d="M8 5 Q8 2 11.5 2 Q15 2 15 5 V26 H8Z" fill="url(#nrd)"/><path d="M15 8 Q15 5 18.5 5 Q22 5 22 8 V26 H15Z" fill="url(#nrd)"/>
<path d="M1 9 Q1 6 4.5 6 Q8 6 8 9 M8 5 Q8 2 11.5 2 Q15 2 15 5 M15 8 Q15 5 18.5 5 Q22 5 22 8" fill="none" stroke="#b01808" stroke-width="0.8"/>
<circle cx="22" cy="19" r="7" fill="#fff" stroke="#7a9ab8" stroke-width="1.3"/><path d="M22 15 V23 M18 19 H26" stroke="#e02828" stroke-width="2.2"/></svg>
<svg class="a" style="left:1569px;top:54px;" width="28" height="30" viewBox="0 0 28 30"><linearGradient id="nrl" x1="0" y1="0" x2="0" y2="1"><stop offset="0" stop-color="#1a6fb0"/><stop offset="1" stop-color="#40c0f0"/></linearGradient><rect x="0" y="0" width="28" height="29" rx="2" fill="url(#nrl)"/>
<g fill="#e8f6fd"><rect x="4" y="6" width="4" height="20" rx="2"/><rect x="11" y="13" width="4" height="13" rx="2"/><rect x="18" y="9" width="4" height="17" rx="2"/></g></svg>
<svg class="a" style="left:1623px;top:54px;" width="28" height="30" viewBox="0 0 28 30"><linearGradient id="nxy" x1="0" y1="0" x2="0" y2="1"><stop offset="0" stop-color="#1a6fb0"/><stop offset="1" stop-color="#40c0f0"/></linearGradient><linearGradient id="nxb" x1="0" y1="0" x2="0" y2="1"><stop offset="0" stop-color="#fff6a0"/><stop offset="1" stop-color="#e8c020"/></linearGradient><rect x="0" y="0" width="28" height="29" rx="2" fill="url(#nxy)"/>
<g fill="url(#nxb)"><rect x="4" y="6" width="4" height="20" rx="2"/><rect x="11" y="13" width="4" height="13" rx="2"/><rect x="18" y="9" width="4" height="17" rx="2"/></g></svg>
<svg class="a" style="left:1673px;top:53px;" width="28" height="31" viewBox="0 0 28 31"><linearGradient id="sfa" x1="0" y1="0" x2="0.6" y2="1"><stop offset="0" stop-color="#e82010"/><stop offset="0.35" stop-color="#f0c010"/><stop offset="0.65" stop-color="#20c030"/><stop offset="1" stop-color="#1040e0"/></linearGradient>
<path d="M2 5 L9 1 L16 4 V15 L26 12 L27 23 L11 30 L2 25Z" fill="url(#sfa)"/>
<path d="M2 5 L9 1 L16 4 L9 8Z" fill="#f04818"/><path d="M9 8 L16 4 V17 L9 21Z" fill="#000" opacity="0.15"/><path d="M9 21 L16 17 L26 13 L27 23 L11 30Z" fill="#1030c0" opacity="0.35"/></svg>
<svg class="a" style="left:1723px;top:53px;" width="24" height="30" viewBox="0 0 24 30"><linearGradient id="rp" x1="0" y1="0" x2="0" y2="1"><stop offset="0" stop-color="#4cc0ef"/><stop offset="1" stop-color="#1880c4"/></linearGradient><rect x="0.5" y="3" width="23" height="26" rx="2" fill="url(#rp)"/><path d="M7 4 H17 V1 H7Z" fill="#1a78b8"/><circle cx="12" cy="2.5" r="2" fill="#1a78b8"/>
<path d="M4 9 H20 M4 14 H20" stroke="#e8f7fd" stroke-width="2"/><rect x="4" y="18" width="6" height="2" fill="#e8f7fd"/><rect x="4" y="22" width="6" height="2" fill="#e8f7fd"/><rect x="12" y="18" width="8" height="6" fill="#e8f7fd"/></svg>
<svg class="a" style="left:3px;top:149px;" width="4" height="15" viewBox="0 0 4 15"><g fill="#555"><rect x="0.5" y="0.5" width="2" height="2"/><rect x="0.5" y="4.5" width="2" height="2"/><rect x="0.5" y="8.5" width="2" height="2"/><rect x="0.5" y="12.5" width="2" height="2"/></g></svg>
<div class="a" style="left:10px;top:146px;width:23px;height:21px;background:#fde08a;border:1px solid #e6b64c;"></div>
<svg class="a" style="left:13px;top:149px;" width="18" height="16" viewBox="0 0 18 16"><path d="M1 1 L10 10 L6 10.5 L8.5 15 L6.5 15.5 L4.5 11 L1.5 13.5Z" fill="#1a9ad8" stroke="#0d6ea8" stroke-width="0.5"/><circle cx="13" cy="6" r="3.5" fill="#f6d23a" stroke="#c89a10" stroke-width="0.6"/><rect x="11.5" y="9.5" width="3" height="3" fill="#c89a10"/></svg>
<svg class="a" style="left:37px;top:148px;" width="16" height="16" viewBox="0 0 16 16"><path d="M6 1 H10 V6 H15 V10 H10 V15 H6 V10 H1 V6 H6Z" fill="#8cbc3a" stroke="#6a9a28" stroke-width="0.6"/><path d="M6.5 2 H9.5 V6.5" fill="none" stroke="#c6e28a" stroke-width="0.8"/></svg>
<svg class="a" style="left:60px;top:154px;" width="17" height="6" viewBox="0 0 17 6"><rect x="0.5" y="0.5" width="16" height="4.5" rx="2" fill="#e03030"/></svg>
<svg class="a" style="left:85px;top:148px;" width="27" height="17" viewBox="0 0 27 17"><rect x="1" y="2.5" width="14" height="13" fill="none" stroke="#4a7a9a" stroke-width="1.2" stroke-dasharray="1.5 1.2"/><path d="M7 6 V13 M3.5 9.5 H10.5" stroke="#e02828" stroke-width="1.3"/><path d="M12 0.5 V6 M9.5 3 H15" stroke="#e02828" stroke-width="1.3"/><path d="M20 6 H26 L23 9.5Z" fill="#333"/></svg>
<svg class="a" style="left:120px;top:148px;" width="18" height="18" viewBox="0 0 18 18"><path d="M5 1.5 H13 L17 9 L13 16.5 H5 L1 9Z" fill="none" stroke="#6a8aa0" stroke-width="1.2" stroke-dasharray="1.5 1.2"/></svg>
<div class="a" style="left:145px;top:148px;width:1px;height:17px;background:#c8c8c8;"></div>
<svg class="a" style="left:151px;top:148px;" width="18" height="18" viewBox="0 0 18 18"><rect x="1" y="8" width="4" height="9" fill="#d83a20"/><rect x="5" y="6" width="4" height="11" fill="#30a040"/><rect x="9" y="8" width="4" height="9" fill="#2a5ab0"/><path d="M10 1 H17 L14.5 4.5 V8 L12.5 9 V4.5Z" fill="#1a9ad8"/></svg>
<div class="a" style="left:173px;top:146px;width:97px;height:21px;background:#fff;border:1px solid #c6c6c6;"></div>
<div class="t" style="left:177.0px;top:149.8px;font-size:12px;line-height:14px;color:#111;transform:scaleX(0.974);transform-origin:0 0;">All</div>
<svg class="a" style="left:257px;top:154px;" width="8" height="5" viewBox="0 0 8 5"><path d="M0.5 0.5 H7.5 L4 4.5Z" fill="#333"/></svg>
<div class="a" style="left:271px;top:146px;width:23px;height:21px;background:#fde08a;border:1px solid #e6b64c;"></div>
<svg class="a" style="left:273px;top:148px;" width="20" height="18" viewBox="0 0 20 18"><path d="M1 9 L10 4 L18 8 V12 L9 16 L1 12Z" fill="#2a8ed0"/><path d="M1 9 L9 13 L18 8 L10 4Z" fill="#5cc2ee"/><path d="M4 8 L12 3 L17 6 L9 11Z" fill="#f0c838"/><path d="M13 2 L16 9 L11 8" fill="none" stroke="#1a4a80" stroke-width="1.2"/></svg>
<div class="a" style="left:295px;top:146px;width:130px;height:21px;background:#ececee;"></div>
<div class="t" style="left:299.0px;top:149.8px;font-size:12px;line-height:14px;color:#7a7a7a;transform:scaleX(0.980);transform-origin:0 0;">Part Only</div>
<svg class="a" style="left:413px;top:154px;" width="8" height="5" viewBox="0 0 8 5"><path d="M0.5 0.5 H7.5 L4 4.5Z" fill="#a8a8a8"/></svg>
<svg class="a" style="left:430px;top:148px;" width="17" height="18" viewBox="0 0 17 18"><path d="M1 4 H16 M1 11 H16" stroke="#9a9a9a" stroke-width="1.4"/><circle cx="6" cy="4" r="2.2" fill="none" stroke="#9a9a9a"/><circle cx="11" cy="4" r="2.2" fill="none" stroke="#9a9a9a"/><circle cx="2" cy="11" r="1.5" fill="#9a9a9a"/><circle cx="15" cy="11" r="1.5" fill="#9a9a9a"/><path d="M8 14 H15 M8 16 H15" stroke="#9a9a9a"/></svg>
<svg class="a" style="left:454px;top:147px;" width="17" height="19" viewBox="0 0 17 19"><circle cx="8" cy="7" r="5.5" fill="#c8c8c8" stroke="#b0b0b0"/><path d="M1 12 H16" stroke="#9a9a9a" stroke-width="1.4"/><path d="M8 15 H15 M8 17 H15" stroke="#9a9a9a"/></svg>
<div class="a" style="left:478px;top:148px;width:1px;height:17px;background:#c8c8c8;"></div>
<svg class="a" style="left:486px;top:149px;" width="16" height="16" viewBox="0 0 16 16"><rect x="1" y="2" width="6" height="3" fill="#9a9a9a"/><rect x="1" y="6.5" width="6" height="3" fill="#9a9a9a"/><rect x="1" y="11" width="6" height="3" fill="#9a9a9a"/><path d="M9 6 L14 10 L11.5 10.5 L13 13.5 L12 14 L10.5 11 L9 12.5Z" fill="#f0f0f0" stroke="#bbb" stroke-width="0.5"/></svg>
<svg class="a" style="left:510px;top:149px;" width="16" height="16" viewBox="0 0 16 16"><rect x="1" y="2" width="6" height="3" fill="#1e9ad0"/><rect x="1" y="6.5" width="6" height="3" fill="#1e9ad0"/><rect x="1" y="11" width="6" height="3" fill="#d84050"/><path d="M9 6 L14 10 L11.5 10.5 L13 13.5 L12 14 L10.5 11 L9 12.5Z" fill="#f0f0f0" stroke="#bbb" stroke-width="0.5"/></svg>
<svg class="a" style="left:534px;top:149px;" width="16" height="16" viewBox="0 0 16 16"><rect x="1" y="2" width="6" height="3" fill="#d84050"/><rect x="1" y="6.5" width="6" height="3" fill="#1e9ad0"/><rect x="1" y="11" width="6" height="3" fill="#d84050"/><path d="M9 6 L14 10 L11.5 10.5 L13 13.5 L12 14 L10.5 11 L9 12.5Z" fill="#f0f0f0" stroke="#bbb" stroke-width="0.5"/></svg>
<svg class="a" style="left:558px;top:149px;" width="16" height="16" viewBox="0 0 16 16"><rect x="1" y="2" width="6" height="3" fill="#9a9a9a"/><rect x="1" y="6.5" width="6" height="3" fill="#9a9a9a"/><rect x="1" y="11" width="6" height="3" fill="#9a9a9a"/><path d="M9 6 L14 10 L11.5 10.5 L13 13.5 L12 14 L10.5 11 L9 12.5Z" fill="#f0f0f0" stroke="#bbb" stroke-width="0.5"/></svg>
<svg class="a" style="left:585px;top:149px;" width="11" height="15" viewBox="0 0 11 15"><path d="M1 1 L9.5 9 L6 9.5 L8 14 L6.3 14.5 L4.3 10 L1.5 12.5Z" fill="#8c8c8c"/></svg>
<svg class="a" style="left:607px;top:149px;" width="15" height="15" viewBox="0 0 15 15"><rect x="1" y="1" width="13" height="3" fill="#e04a2a"/><rect x="1" y="5" width="13" height="3" fill="#f0a030"/><rect x="1" y="9" width="13" height="2.5" fill="#c0c4c8"/><rect x="1" y="12" width="13" height="2.5" fill="#c0c4c8"/></svg>
<svg class="a" style="left:630px;top:148px;" width="17" height="17" viewBox="0 0 17 17"><path d="M1 4 L5 1 H16 V13 L12 16 H1Z" fill="#2a9ad8"/><rect x="5" y="5" width="10" height="10" fill="#f6c040"/><path d="M8 8 L13 13 M10 13 H13 V10" stroke="#e02828" stroke-width="1.3" fill="none"/></svg>
<svg class="a" style="left:654px;top:148px;" width="16" height="17" viewBox="0 0 16 17"><rect x="3" y="1" width="12" height="15" fill="#2a9ad8"/><circle cx="7" cy="9" r="5.5" fill="#f0d060" stroke="#d09020" stroke-width="0.7"/><path d="M3 9 A4 4 0 0 1 10 6" fill="#e04a2a"/></svg>
<svg class="a" style="left:677px;top:148px;" width="18" height="17" viewBox="0 0 18 17"><path d="M1 10 Q1 6 5 6 H10 V14 H4 Q1 14 1 10Z" fill="#2a7ac0"/><rect x="3" y="9" width="5" height="3" fill="#fff"/><circle cx="13" cy="7" r="4.5" fill="none" stroke="#f0a020" stroke-width="2.6" stroke-dasharray="1.8 1.2"/></svg>
<div class="a" style="left:701px;top:148px;width:1px;height:17px;background:#c8c8c8;"></div>
<svg class="a" style="left:708px;top:148px;" width="17" height="18" viewBox="0 0 17 18"><circle cx="8.5" cy="9" r="7" fill="none" stroke="#9a9a9a" stroke-width="1.2"/><path d="M6 5 L12 10 L9.5 10.5 L11 13.5 L10 14 L8.5 11 L6.5 12.5Z" fill="#9a9a9a"/></svg>
<svg class="a" style="left:735px;top:148px;" width="12" height="18" viewBox="0 0 12 18"><path d="M2 16 V4 Q2 1.5 5 1.5 Q8 1.5 8 4 V13" fill="none" stroke="#9a9a9a" stroke-width="1.4"/><circle cx="8" cy="15" r="1.5" fill="#9a9a9a"/></svg>
<svg class="a" style="left:757px;top:148px;" width="16" height="17" viewBox="0 0 16 17"><rect x="1" y="1" width="14" height="14" fill="#f4f4f4" stroke="#c8c8c8"/><rect x="4" y="4" width="8.5" height="8.5" fill="#555"/></svg>
<div class="a" style="left:778px;top:146px;width:97px;height:21px;background:#fff;border:1px solid #c6c6c6;"></div>
<div class="t" style="left:782.3px;top:149.8px;font-size:12px;line-height:14px;color:#111;transform:scaleX(0.960);transform-origin:0 0;">Single Pick</div>
<svg class="a" style="left:862px;top:154px;" width="8" height="5" viewBox="0 0 8 5"><path d="M0.5 0.5 H7.5 L4 4.5Z" fill="#333"/></svg>
<svg class="a" style="left:881px;top:149px;" width="17" height="17" viewBox="0 0 17 17"><path d="M1 1 L10 9 L6.5 9.5 L8.5 14 L6.8 14.5 L4.8 10 L2 12.5Z" fill="#a0a0a0"/><path d="M9 12 L13 14" stroke="#d8d8d8" stroke-width="2"/></svg>
<svg class="a" style="left:904px;top:149px;" width="17" height="17" viewBox="0 0 17 17"><circle cx="9" cy="6" r="3" fill="none" stroke="#9a9a9a" stroke-width="1.5"/><path d="M1 4 L6 9 L4 10 L5 14 L3.5 14.5 L2.5 10.5 L1 12Z" fill="#a0a0a0"/></svg>
<svg class="a" style="left:928px;top:149px;" width="17" height="17" viewBox="0 0 17 17"><circle cx="7.5" cy="8" r="6.8" fill="none" stroke="#9a9a9a" stroke-width="1.3"/><path d="M5.5 4 L11.5 8 L5.5 12Z" fill="#a0a0a0"/></svg>
<svg class="a" style="left:951px;top:149px;" width="17" height="17" viewBox="0 0 17 17"><g fill="#9a9a9a"><circle cx="2" cy="6" r="1.1"/><circle cx="6" cy="6.5" r="1.1"/><circle cx="8" cy="2" r="1.1"/><circle cx="8" cy="9" r="1.3"/><circle cx="12" cy="6" r="1.1"/><circle cx="15" cy="4.5" r="1.1"/><circle cx="12" cy="12" r="1.1"/></g></svg>
<svg class="a" style="left:976px;top:149px;" width="17" height="17" viewBox="0 0 17 17"><path d="M1 14 L14 2" stroke="#9a9a9a" stroke-width="1.3"/><circle cx="13.5" cy="2.5" r="1.6" fill="#9a9a9a"/></svg>
<svg class="a" style="left:1000px;top:149px;" width="17" height="17" viewBox="0 0 17 17"><path d="M1 14 L14 2" stroke="#9a9a9a" stroke-width="1.3"/><circle cx="7.5" cy="8" r="1.6" fill="#9a9a9a"/></svg>
<svg class="a" style="left:1023px;top:149px;" width="17" height="17" viewBox="0 0 17 17"><circle cx="7.5" cy="8" r="6.8" fill="none" stroke="#9a9a9a" stroke-width="1.2"/><path d="M5.5 7 H9.5 L7.5 9.5Z" fill="#9a9a9a"/></svg>
<svg class="a" style="left:1047px;top:149px;" width="17" height="17" viewBox="0 0 17 17"><circle cx="7.5" cy="8" r="6.5" fill="none" stroke="#9a9a9a" stroke-width="1.2"/><g fill="#9a9a9a"><circle cx="7.5" cy="1.5" r="1.2"/><circle cx="7.5" cy="14.5" r="1.2"/><circle cx="1" cy="8" r="1.2"/><circle cx="14" cy="8" r="1.2"/></g></svg>
<svg class="a" style="left:1072px;top:149px;" width="17" height="17" viewBox="0 0 17 17"><path d="M1 8 Q4 1 6 6 T11 12 L14 5" fill="none" stroke="#9a9a9a" stroke-width="1.2"/><circle cx="6" cy="2" r="1" fill="#9a9a9a"/><circle cx="10" cy="14" r="1" fill="#9a9a9a"/></svg>
<svg class="a" style="left:1096px;top:149px;" width="17" height="17" viewBox="0 0 17 17"><path d="M1 8 Q4 2 7 7 T14 6" fill="none" stroke="#9a9a9a" stroke-width="1.3"/></svg>
<svg class="a" style="left:1119px;top:149px;" width="17" height="17" viewBox="0 0 17 17"><path d="M2 15 Q2 3 8 3 Q14 3 14 15" fill="none" stroke="#9a9a9a" stroke-width="1.3"/><path d="M5 15 Q5 6 8 6" fill="none" stroke="#9a9a9a" stroke-width="1"/></svg>
<svg class="a" style="left:1143px;top:149px;" width="17" height="17" viewBox="0 0 17 17"><path d="M1 15 L14 2" stroke="#9a9a9a" stroke-width="1.3"/><circle cx="12" cy="4" r="1.8" fill="#9a9a9a"/></svg>
<svg class="a" style="left:1167px;top:149px;" width="17" height="17" viewBox="0 0 17 17"><path d="M1 8 L9 4 L16 8 L8 12Z" fill="#b0b0b0"/><path d="M1 10 L8 14 L16 10" fill="none" stroke="#a0a0a0" stroke-width="1.5"/><path d="M4 8 L12 8" stroke="#e0e0e0"/></svg>
<svg class="a" style="left:1191px;top:149px;" width="17" height="17" viewBox="0 0 17 17"><path d="M1 8 L9 4 L16 8 L8 12Z" fill="#b0b0b0"/><path d="M1 10 L8 14 L16 10" fill="none" stroke="#a0a0a0" stroke-width="1.5"/><path d="M4 8 L12 8" stroke="#e0e0e0"/></svg>
<div class="t" style="left:6.0px;top:174.8px;font-size:12px;line-height:14px;color:#333;transform:scaleX(1.071);transform-origin:0 0;">Simulation</div>
<div class="a" style="left:1px;top:194px;width:362px;height:23px;background:#fff;border:1px solid #c9c9c9;"></div>
<div class="t" style="left:5.0px;top:198.8px;font-size:12px;line-height:14px;color:#767676;transform:scaleX(0.894);transform-origin:0 0;">Search</div>
<div class="a" style="left:367px;top:171px;width:198px;height:24px;background:#fafafa;border:1px solid #c9c9c9;border-bottom:none;"></div>
<div class="t" style="left:399.0px;top:175.8px;font-size:12px;line-height:14px;color:#222;transform:scaleX(0.942);transform-origin:0 0;">* Jack support part.Z3PRT</div>
<svg class="a" style="left:539px;top:177px;" width="10" height="10" viewBox="0 0 10 10"><path d="M1 1 L9 9 M9 1 L1 9" stroke="#6b5a2a" stroke-width="1.6"/></svg>
<svg class="a" style="left:569px;top:176px;" width="13" height="13" viewBox="0 0 13 13"><path d="M6.5 1 V12 M1 6.5 H12" stroke="#8a8a8a" stroke-width="1.3"/></svg>
<svg class="a" style="left:1902px;top:175px;" width="13" height="12" viewBox="0 0 13 12"><path d="M1 1.5 H12 M1 4 H12" stroke="#8a8a8a" stroke-width="1.2"/><path d="M1 6 H12 L6.5 11Z" fill="#8a8a8a"/></svg>
<div class="a" style="left:3px;top:235px;width:358px;height:18px;background:#f5f5f5;"></div>
<div class="a" style="left:3px;top:271px;width:358px;height:18px;background:#f5f5f5;"></div>
<div class="a" style="left:3px;top:307px;width:358px;height:18px;background:#f5f5f5;"></div>
<div class="a" style="left:3px;top:343px;width:358px;height:18px;background:#f5f5f5;"></div>
<div class="a" style="left:3px;top:379px;width:358px;height:18px;background:#f5f5f5;"></div>
<div class="a" style="left:3px;top:415px;width:358px;height:18px;background:#f5f5f5;"></div>
<div class="a" style="left:3px;top:451px;width:358px;height:18px;background:#f5f5f5;"></div>
<div class="a" style="left:3px;top:487px;width:358px;height:18px;background:#f5f5f5;"></div>
<div class="a" style="left:3px;top:523px;width:358px;height:18px;background:#f5f5f5;"></div>
<div class="a" style="left:3px;top:559px;width:358px;height:18px;background:#f5f5f5;"></div>
<div class="a" style="left:3px;top:595px;width:358px;height:18px;background:#f5f5f5;"></div>
<div class="a" style="left:3px;top:631px;width:358px;height:18px;background:#f5f5f5;"></div>
<div class="a" style="left:3px;top:667px;width:358px;height:18px;background:#f5f5f5;"></div>
<div class="a" style="left:3px;top:703px;width:358px;height:18px;background:#f5f5f5;"></div>
<div class="a" style="left:3px;top:739px;width:358px;height:18px;background:#f5f5f5;"></div>
<div class="a" style="left:3px;top:775px;width:358px;height:18px;background:#f5f5f5;"></div>
<div class="a" style="left:3px;top:811px;width:358px;height:18px;background:#f5f5f5;"></div>
<div class="a" style="left:3px;top:847px;width:358px;height:18px;background:#f5f5f5;"></div>
<div class="a" style="left:3px;top:883px;width:358px;height:18px;background:#f5f5f5;"></div>
<div class="a" style="left:3px;top:919px;width:358px;height:18px;background:#f5f5f5;"></div>
<div class="a" style="left:3px;top:955px;width:358px;height:18px;background:#f5f5f5;"></div>
<div class="a" style="left:3px;top:991px;width:358px;height:18px;background:#f5f5f5;"></div>
<div class="a" style="left:3px;top:1027px;width:358px;height:18px;background:#f5f5f5;"></div>
<svg class="a" style="left:4px;top:223px;" width="10" height="6" viewBox="0 0 10 6"><path d="M1 1 L4.5 4.5 L8 1" fill="none" stroke="#3a3a3a" stroke-width="1.6"/></svg>
<svg class="a" style="left:20px;top:217px;" width="16" height="17" viewBox="0 0 16 17"><path d="M1 12 Q1 9 8 9 Q15 9 15 12 L14 15 Q8 17 2 15Z" fill="#1a8fd0"/><path d="M3 9 L8 6.5 L13 9 L8 11.5Z" fill="#f0b030"/><path d="M3 8 L8 5.5 L13 8" fill="none" stroke="#f0c850" stroke-width="1.5"/><path d="M8 0.5 V5" stroke="#e02828" stroke-width="1.2"/><path d="M6 3.5 H10 L8 6Z" fill="#e02828"/></svg>
<div class="t" style="left:38.5px;top:219.8px;font-size:12px;line-height:14px;color:#1e1e1e;transform:scaleX(0.911);transform-origin:0 0;">Static1</div>
<svg class="a" style="left:18px;top:241px;" width="10" height="6" viewBox="0 0 10 6"><path d="M1 1 L4.5 4.5 L8 1" fill="none" stroke="#3a3a3a" stroke-width="1.6"/></svg>
<svg class="a" style="left:34px;top:235px;" width="16" height="17" viewBox="0 0 16 17"><rect x="5" y="1.5" width="6" height="4.5" fill="#1a8ad0"/><path d="M8 6 V9 M3 9 H13 M3 9 V11 M13 9 V11" stroke="#888" stroke-width="0.8" fill="none"/><rect x="1" y="11" width="6" height="4.5" fill="#1a8ad0"/><rect x="9" y="11" width="6" height="4.5" fill="#1a8ad0"/><rect x="1" y="14" width="14" height="1.5" fill="#1373b0"/></svg>
<div class="t" style="left:52.5px;top:237.8px;font-size:12px;line-height:14px;color:#1e1e1e;transform:scaleX(0.927);transform-origin:0 0;">Part</div>
<svg class="a" style="left:32px;top:259px;" width="10" height="6" viewBox="0 0 10 6"><path d="M1 1 L4.5 4.5 L8 1" fill="none" stroke="#3a3a3a" stroke-width="1.6"/></svg>
<svg class="a" style="left:47px;top:253px;" width="16" height="17" viewBox="0 0 16 17"><path d="M5.5 0.5 L10.5 9.5 Q5.5 11.5 0.5 9.5Z" fill="#1d90d4"/><path d="M5.5 0.5 L10.5 9.5 Q8 10.5 6 10.6Z" fill="#0f6aa8"/><rect x="6" y="8" width="9" height="8" rx="4" fill="#e0a818"/><ellipse cx="8.5" cy="12" rx="3.6" ry="4" fill="#f6cc3a"/></svg>
<div class="t" style="left:66.5px;top:255.8px;font-size:12px;line-height:14px;color:#1e1e1e;transform:scaleX(0.962);transform-origin:0 0;">Geometry Part</div>
<svg class="a" style="left:61px;top:271px;" width="16" height="17" viewBox="0 0 16 17"><path d="M1 5 L8 2 L15 5 V12 L8 15.5 L1 12Z" fill="#1a7ec8"/><path d="M1 5 L8 8 L15 5 L8 2Z" fill="#47b4ec"/><path d="M8 8 V15.5 L15 12 V5Z" fill="#0f5e9e"/></svg>
<div class="t" style="left:80.0px;top:273.8px;font-size:12px;line-height:14px;color:#1e1e1e;transform:scaleX(0.968);transform-origin:0 0;">S1(Alloys[Structural Steel A36])(Solid)</div>
<svg class="a" style="left:36px;top:289px;" width="11" height="17" viewBox="0 0 11 17"><path d="M1 3 L5 1 L10 3 V9 L1 9Z" fill="#f4b030"/><path d="M1 9 H10 V14 L5 16 L1 14Z" fill="#1a8ad0"/><path d="M5 3 V16" stroke="#d09020" stroke-width="0.5"/></svg>
<div class="t" style="left:52.5px;top:291.8px;font-size:12px;line-height:14px;color:#1e1e1e;transform:scaleX(0.856);transform-origin:0 0;">Set</div>
<svg class="a" style="left:34px;top:307px;" width="16" height="17" viewBox="0 0 16 17"><path d="M1 10 L8 6.5 L15 10 V13 L8 16.5 L1 13Z" fill="#1a8ad0"/><path d="M1 10 L8 13.5 L15 10 L8 6.5Z" fill="#60c8f0"/><path d="M2 7 L8 4 L14 7 L8 10Z" fill="#f0c860"/><path d="M3 4 L8 1.5 L13 4 L8 6.5Z" fill="#d8d8d8"/></svg>
<div class="t" style="left:52.5px;top:309.8px;font-size:12px;line-height:14px;color:#1e1e1e;transform:scaleX(1.009);transform-origin:0 0;">Contact</div>
<svg class="a" style="left:34px;top:325px;" width="16" height="17" viewBox="0 0 16 17"><path d="M8 2 V16 M2 5 L14 13 M14 5 L2 13" stroke="#e8a0a8" stroke-width="0.9"/><g fill="#2a8ec8"><circle cx="8" cy="2" r="1.3"/><circle cx="8" cy="16" r="1.3"/><circle cx="2" cy="5" r="1.3"/><circle cx="14" cy="13" r="1.3"/><circle cx="14" cy="5" r="1.3"/><circle cx="2" cy="13" r="1.3"/><circle cx="8" cy="9" r="1.2"/></g></svg>
<div class="t" style="left:52.5px;top:327.8px;font-size:12px;line-height:14px;color:#1e1e1e;">Connection</div>
<svg class="a" style="left:20px;top:347px;" width="6" height="10" viewBox="0 0 6 10"><path d="M1 1 L4.5 4.5 L1 8" fill="none" stroke="#8a8a8a" stroke-width="1.6"/></svg>
<svg class="a" style="left:34px;top:343px;" width="16" height="17" viewBox="0 0 16 17"><path d="M1 14 L8 16 L15 13 L9 11Z" fill="#f4b840"/><path d="M3 3 L7 1 L9 2.5 V8 L13 9 V13 L8 15 L3 13Z" fill="#1a8ad0"/><path d="M3 3 L7 5 V13 M7 5 L9 3 M7 9 L13 9" stroke="#0f60a0" stroke-width="0.7" fill="none"/></svg>
<div class="t" style="left:52.5px;top:345.8px;font-size:12px;line-height:14px;color:#1e1e1e;">Constraint</div>
<svg class="a" style="left:20px;top:365px;" width="6" height="10" viewBox="0 0 6 10"><path d="M1 1 L4.5 4.5 L1 8" fill="none" stroke="#8a8a8a" stroke-width="1.6"/></svg>
<svg class="a" style="left:34px;top:361px;" width="16" height="17" viewBox="0 0 16 17"><path d="M3 3 Q3 1 6 1 Q8 1 8 4 L5 8 L8 8" fill="none" stroke="#1a8ad0" stroke-width="2"/><circle cx="4" cy="13" r="3" fill="#1a8ad0"/><path d="M11 1 V12 M13.5 1 V12" stroke="#1a8ad0" stroke-width="2"/><path d="M9 11 H16 L12.5 16Z" fill="#1a8ad0"/></svg>
<div class="t" style="left:52.5px;top:363.8px;font-size:12px;line-height:14px;color:#1e1e1e;transform:scaleX(0.981);transform-origin:0 0;">Mechanical Load</div>
<svg class="a" style="left:18px;top:385px;" width="10" height="6" viewBox="0 0 10 6"><path d="M1 1 L4.5 4.5 L8 1" fill="none" stroke="#3a3a3a" stroke-width="1.6"/></svg>
<div class="a" style="left:33px;top:382px;width:13px;height:13px;background:#fff;border:1.5px solid #222;"></div>
<svg class="a" style="left:53px;top:379px;" width="16" height="17" viewBox="0 0 16 17"><path d="M1 5 L8 2 L15 5 V12 L8 15.5 L1 12Z" fill="#1a7ec8"/><path d="M1 5 L8 8 L15 5 L8 2Z" fill="#5cc4f2"/><path d="M8 8 V15.5 L15 12 V5Z" fill="#0f5e9e"/></svg>
<div class="t" style="left:71.7px;top:381.8px;font-size:12px;line-height:14px;color:#1e1e1e;transform:scaleX(0.951);transform-origin:0 0;">Mesh</div>
<svg class="a" style="left:32px;top:403px;" width="10" height="6" viewBox="0 0 10 6"><path d="M1 1 L4.5 4.5 L8 1" fill="none" stroke="#3a3a3a" stroke-width="1.6"/></svg>
<div class="a" style="left:47px;top:400px;width:13px;height:13px;background:#fff;border:1.5px solid #222;"></div>
<svg class="a" style="left:66px;top:397px;" width="16" height="17" viewBox="0 0 16 17"><path d="M5.5 0.5 L10.5 9.5 Q5.5 11.5 0.5 9.5Z" fill="#1d90d4"/><path d="M5.5 0.5 L10.5 9.5 Q8 10.5 6 10.6Z" fill="#0f6aa8"/><rect x="6" y="8" width="9" height="8" rx="4" fill="#e0a818"/><ellipse cx="8.5" cy="12" rx="3.6" ry="4" fill="#f6cc3a"/></svg>
<div class="t" style="left:85.8px;top:399.8px;font-size:12px;line-height:14px;color:#1e1e1e;transform:scaleX(0.970);transform-origin:0 0;">Dependent Mesh</div>
<svg class="a" style="left:46px;top:421px;" width="10" height="6" viewBox="0 0 10 6"><path d="M1 1 L4.5 4.5 L8 1" fill="none" stroke="#3a3a3a" stroke-width="1.6"/></svg>
<svg class="a" style="left:61px;top:415px;" width="16" height="17" viewBox="0 0 16 17"><path d="M1 5 L8 2 L15 5 V12 L8 15.5 L1 12Z" fill="#1a7ec8"/><path d="M1 5 L8 8 L15 5 L8 2Z" fill="#47b4ec"/><path d="M8 8 V15.5 L15 12 V5Z" fill="#0f5e9e"/></svg>
<div class="t" style="left:80.4px;top:417.8px;font-size:12px;line-height:14px;color:#1e1e1e;transform:scaleX(0.709);transform-origin:0 0;">S1</div>
<svg class="a" style="left:60px;top:439px;" width="10" height="6" viewBox="0 0 10 6"><path d="M1 1 L4.5 4.5 L8 1" fill="none" stroke="#3a3a3a" stroke-width="1.6"/></svg>
<svg class="a" style="left:75px;top:433px;" width="16" height="17" viewBox="0 0 16 17"><path d="M1 5 L8 2 L15 5 V12 L8 15.5 L1 12Z" fill="#f4a820"/><path d="M1 5 L8 8 L15 5 L8 2Z" fill="#ffd060"/><path d="M4 3.8 L11 6.8 M11.5 3.5 L4.5 6.5 M1 8.5 L8 11.5 L15 8.5 M4.5 6.5 V14 M11.5 6.5 V14 M8 8 V15.5" stroke="#e08a10" stroke-width="0.6" fill="none"/></svg>
<div class="t" style="left:94.2px;top:435.8px;font-size:12px;line-height:14px;color:#1e1e1e;transform:scaleX(0.841);transform-origin:0 0;">3D</div>
<div class="a" style="left:89px;top:454px;width:13px;height:13px;background:#fff;border:1.5px solid #222;"></div>
<svg class="a" style="left:109px;top:451px;" width="16" height="17" viewBox="0 0 16 17"><rect x="1" y="4" width="14" height="9" rx="4" fill="#1a8ad0"/><ellipse cx="5" cy="8.5" rx="4" ry="4.5" fill="#38aee8"/><path d="M8 5 V12" stroke="#0f60a0" stroke-width="0.8"/></svg>
<div class="t" style="left:126.2px;top:453.8px;font-size:12px;line-height:14px;color:#1e1e1e;transform:scaleX(0.791);transform-origin:0 0;">S1</div>
<svg class="a" style="left:33px;top:469px;" width="16" height="17" viewBox="0 0 16 17"><rect x="0.5" y="0.5" width="8" height="7" fill="#1a8ad0"/><path d="M4.5 0.5 V7.5 M0.5 4 H8.5" stroke="#b0e0f8" stroke-width="0.7"/><path d="M1.5 9 Q2 12 5 12.5" fill="none" stroke="#e03030" stroke-width="1.2"/><path d="M4 10.5 L6.5 12.5 L4 14.5Z" fill="#e03030"/><rect x="8" y="9" width="8" height="8" fill="#f4a020"/><path d="M10.6 9 V17 M13.3 9 V17 M8 11.6 H16 M8 14.3 H16" stroke="#fff0c0" stroke-width="0.6"/></svg>
<div class="t" style="left:52.5px;top:471.8px;font-size:12px;line-height:14px;color:#1e1e1e;transform:scaleX(1.007);transform-origin:0 0;">Mesh Adaptation</div>
<svg class="a" style="left:18px;top:493px;" width="10" height="6" viewBox="0 0 10 6"><path d="M1 1 L4.5 4.5 L8 1" fill="none" stroke="#3a3a3a" stroke-width="1.6"/></svg>
<svg class="a" style="left:34px;top:487px;" width="16" height="17" viewBox="0 0 16 17"><path d="M0.5 16.5 L2.5 9.5 Q8 13 13.5 9.5 L15.5 16.5Z" fill="#1888cc"/><path d="M2.5 9.5 Q8 13 13.5 9.5 L14.3 12.3 Q8 16 1.7 12.3Z" fill="#58c4f0"/><rect x="3" y="5" width="4" height="8" rx="1.5" fill="#30b040"/><rect x="3" y="5" width="4" height="4.4" rx="1.5" fill="#e8c020"/><rect x="3" y="5" width="4" height="2.4" rx="1.5" fill="#d83020"/><rect x="6.5" y="2" width="4" height="9.5" rx="1.5" fill="#30b040"/><rect x="6.5" y="2" width="4" height="5.2" rx="1.5" fill="#e8c020"/><rect x="6.5" y="2" width="4" height="2.9" rx="1.5" fill="#d83020"/><rect x="10" y="0.5" width="4" height="9" rx="1.5" fill="#30b040"/><rect x="10" y="0.5" width="4" height="5.0" rx="1.5" fill="#e8c020"/><rect x="10" y="0.5" width="4" height="2.7" rx="1.5" fill="#d83020"/></svg>
<div class="t" style="left:52.5px;top:489.8px;font-size:12px;line-height:14px;color:#1e1e1e;transform:scaleX(0.919);transform-origin:0 0;">Result</div>
<svg class="a" style="left:47px;top:505px;" width="16" height="17" viewBox="0 0 16 17"><path d="M0.5 16.5 L2.5 9.5 Q8 13 13.5 9.5 L15.5 16.5Z" fill="#1888cc"/><path d="M2.5 9.5 Q8 13 13.5 9.5 L14.3 12.3 Q8 16 1.7 12.3Z" fill="#58c4f0"/><rect x="3" y="5" width="4" height="8" rx="1.5" fill="#30b040"/><rect x="3" y="5" width="4" height="4.4" rx="1.5" fill="#e8c020"/><rect x="3" y="5" width="4" height="2.4" rx="1.5" fill="#d83020"/><rect x="6.5" y="2" width="4" height="9.5" rx="1.5" fill="#30b040"/><rect x="6.5" y="2" width="4" height="5.2" rx="1.5" fill="#e8c020"/><rect x="6.5" y="2" width="4" height="2.9" rx="1.5" fill="#d83020"/><rect x="10" y="0.5" width="4" height="9" rx="1.5" fill="#30b040"/><rect x="10" y="0.5" width="4" height="5.0" rx="1.5" fill="#e8c020"/><rect x="10" y="0.5" width="4" height="2.7" rx="1.5" fill="#d83020"/></svg>
<div class="t" style="left:66.5px;top:507.8px;font-size:12px;line-height:14px;color:#1e1e1e;font-weight:bold;transform:scaleX(0.954);transform-origin:0 0;">Total Displacements</div>
<svg class="a" style="left:47px;top:523px;" width="16" height="17" viewBox="0 0 16 17"><path d="M0.5 16.5 L2.5 9.5 Q8 13 13.5 9.5 L15.5 16.5Z" fill="#1888cc"/><path d="M2.5 9.5 Q8 13 13.5 9.5 L14.3 12.3 Q8 16 1.7 12.3Z" fill="#58c4f0"/><rect x="3" y="5" width="4" height="8" rx="1.5" fill="#30b040"/><rect x="3" y="5" width="4" height="4.4" rx="1.5" fill="#e8c020"/><rect x="3" y="5" width="4" height="2.4" rx="1.5" fill="#d83020"/><rect x="6.5" y="2" width="4" height="9.5" rx="1.5" fill="#30b040"/><rect x="6.5" y="2" width="4" height="5.2" rx="1.5" fill="#e8c020"/><rect x="6.5" y="2" width="4" height="2.9" rx="1.5" fill="#d83020"/><rect x="10" y="0.5" width="4" height="9" rx="1.5" fill="#30b040"/><rect x="10" y="0.5" width="4" height="5.0" rx="1.5" fill="#e8c020"/><rect x="10" y="0.5" width="4" height="2.7" rx="1.5" fill="#d83020"/></svg>
<div class="t" style="left:66.5px;top:525.8px;font-size:12px;line-height:14px;color:#1e1e1e;transform:scaleX(0.949);transform-origin:0 0;">Avg. vonMises Stress</div>
<svg class="a" style="left:47px;top:541px;" width="16" height="17" viewBox="0 0 16 17"><path d="M0.5 16.5 L2.5 9.5 Q8 13 13.5 9.5 L15.5 16.5Z" fill="#1888cc"/><path d="M2.5 9.5 Q8 13 13.5 9.5 L14.3 12.3 Q8 16 1.7 12.3Z" fill="#58c4f0"/><rect x="3" y="5" width="4" height="8" rx="1.5" fill="#30b040"/><rect x="3" y="5" width="4" height="4.4" rx="1.5" fill="#e8c020"/><rect x="3" y="5" width="4" height="2.4" rx="1.5" fill="#d83020"/><rect x="6.5" y="2" width="4" height="9.5" rx="1.5" fill="#30b040"/><rect x="6.5" y="2" width="4" height="5.2" rx="1.5" fill="#e8c020"/><rect x="6.5" y="2" width="4" height="2.9" rx="1.5" fill="#d83020"/><rect x="10" y="0.5" width="4" height="9" rx="1.5" fill="#30b040"/><rect x="10" y="0.5" width="4" height="5.0" rx="1.5" fill="#e8c020"/><rect x="10" y="0.5" width="4" height="2.7" rx="1.5" fill="#d83020"/></svg>
<div class="t" style="left:66.5px;top:543.8px;font-size:12px;line-height:14px;color:#1e1e1e;transform:scaleX(0.954);transform-origin:0 0;">Element Strain Energy</div>
<svg class="a" style="left:186px;top:553px;" width="14" height="21" viewBox="0 0 14 21"><path d="M1 1 L1 16 L4.5 12.5 L7 18.5 L9.5 17.5 L7 11.5 L12 11.5Z" fill="#fff" stroke="#111" stroke-width="1"/></svg>
<div class="t" style="left:387.0px;top:202.3px;font-size:12px;line-height:14px;color:#1a1a1a;transform:scaleX(0.981);transform-origin:0 0;">You can set the hotkey in Customize Settings.</div>
<div class="t" style="left:387.0px;top:216.1px;font-size:12px;line-height:14px;color:#1a1a1a;transform:scaleX(0.992);transform-origin:0 0;">Click "Help/Show Hints" to disable these hints.</div>
<svg class="a" style="left:847px;top:200px;" width="17" height="15" viewBox="0 0 17 15"><path d="M7 1.5 H15.5 V13.5 H7" fill="none" stroke="#a8a8a8" stroke-width="1.6"/><path d="M1 7.5 H11" stroke="#a8a8a8" stroke-width="1.6"/><path d="M1 7.5 L5 4 M1 7.5 L5 11" stroke="#a8a8a8" stroke-width="1.6"/></svg>
<svg class="a" style="left:871px;top:198px;" width="19" height="18" viewBox="0 0 19 18"><path d="M2 10 L10 6 L18 10 L10 14Z" fill="#a0d890" stroke="#60b050" stroke-width="0.6"/><path d="M4 10 L11 13 M6 9 L13 12 M8 8 L15 11" stroke="#40a030" stroke-width="0.7"/><path d="M10 14 V17 L18 13 V10" fill="none" stroke="#f0a040" stroke-width="0.8"/><circle cx="6" cy="4.5" r="3.5" fill="#3a90d8"/><path d="M4 3 Q6 6 8 4" stroke="#fff" stroke-width="1" fill="none"/></svg>
<svg class="a" style="left:893px;top:205px;" width="6" height="4" viewBox="0 0 6 4"><path d="M0 0 H6 L3 4Z" fill="#333"/></svg>
<svg class="a" style="left:912px;top:200px;" width="13" height="14" viewBox="0 0 13 14"><path d="M2 12 L10 2 L12.5 4 L4.5 13.5Z" fill="#f4f4f4" stroke="#c83030" stroke-width="0.9"/><path d="M2 12 L4.5 13.5 L6 11.5 L3.5 10Z" fill="#e03838"/><path d="M8 4.5 L10.5 6.5" stroke="#f0c040" stroke-width="2"/></svg>
<svg class="a" style="left:933px;top:199px;" width="18" height="17" viewBox="0 0 18 17"><path d="M1 8 L9 4.5 L17 8 V13 L9 16.5 L1 13Z" fill="#1a80c8"/><path d="M1 8 L9 11.5 L17 8 L9 4.5Z" fill="#f6d440"/><path d="M1 8 V13 L9 16.5 V11.5Z" fill="#a8dcf4"/><path d="M9 1 V9" stroke="#222" stroke-width="0.9"/><path d="M7.5 3 L9 0.5 L10.5 3Z" fill="#222"/></svg>
<svg class="a" style="left:958px;top:199px;" width="19" height="17" viewBox="0 0 19 17"><path d="M1 5 L11 1 L18 4 V12 L8 16 L1 13Z" fill="#1a6ab8"/><path d="M1 5 L8 8 L18 4 L11 1Z" fill="#7ccaf0"/><path d="M1 5 L8 8 V16 L1 13Z" fill="#3ca8e8"/></svg>
<svg class="a" style="left:980px;top:205px;" width="6" height="4" viewBox="0 0 6 4"><path d="M0 0 H6 L3 4Z" fill="#333"/></svg>
<svg class="a" style="left:995px;top:199px;" width="19" height="17" viewBox="0 0 19 17"><path d="M1 5 L11 1 L18 4 V12 L8 16 L1 13Z" fill="#fff" stroke="#a0a0a0" stroke-width="0.9"/><path d="M1 5 L8 8 L18 4 M8 8 V16" fill="none" stroke="#a0a0a0" stroke-width="0.9"/></svg>
<svg class="a" style="left:1017px;top:205px;" width="6" height="4" viewBox="0 0 6 4"><path d="M0 0 H6 L3 4Z" fill="#333"/></svg>
<svg class="a" style="left:1032px;top:199px;" width="19" height="17" viewBox="0 0 19 17"><path d="M5 1.5 L13 1 L18 7 L15 14.5 L6 16 L1 9Z" fill="#f8a830" stroke="#c86010" stroke-width="0.8"/><path d="M9 8 L5 1.5 M9 8 L13 1 M9 8 L18 7 M9 8 L15 14.5 M9 8 L6 16 M9 8 L1 9" stroke="#d04010" stroke-width="0.7"/></svg>
<svg class="a" style="left:1054px;top:205px;" width="6" height="4" viewBox="0 0 6 4"><path d="M0 0 H6 L3 4Z" fill="#333"/></svg>
<svg class="a" style="left:1069px;top:199px;" width="18" height="17" viewBox="0 0 18 17"><rect x="1" y="1" width="16" height="15" fill="#5aa8d0" stroke="#3a88b8"/><circle cx="9" cy="8.5" r="6" fill="#e8c840" stroke="#c0a020"/><rect x="6.5" y="5" width="5" height="7" fill="#f8f8f8" stroke="#999" stroke-width="0.5"/></svg>
<svg class="a" style="left:1091px;top:205px;" width="6" height="4" viewBox="0 0 6 4"><path d="M0 0 H6 L3 4Z" fill="#333"/></svg>
<svg class="a" style="left:1108px;top:199px;" width="16" height="17" viewBox="0 0 16 17"><circle cx="8" cy="9" r="5" fill="none" stroke="#4a6ab0" stroke-width="1"/><path d="M8 2 V16 M1 9 H15" stroke="#d82020" stroke-width="1.3"/><path d="M10 1.5 Q15 2 15 7" fill="none" stroke="#d82020" stroke-width="1.3"/></svg>
<svg class="a" style="left:1129px;top:205px;" width="6" height="4" viewBox="0 0 6 4"><path d="M0 0 H6 L3 4Z" fill="#333"/></svg>
<svg class="a" style="left:1143px;top:199px;" width="18" height="17" viewBox="0 0 18 17"><rect x="1" y="1" width="15.5" height="15" fill="#f4f8fb" stroke="#a8b8c4" stroke-width="1"/><rect x="3" y="10" width="4" height="4" fill="#1a70b8"/><path d="M8 9 L14 3" stroke="#6aa8d8" stroke-width="0.9" stroke-dasharray="1.5 1"/></svg>
<svg class="a" style="left:1170px;top:199px;" width="15" height="17" viewBox="0 0 15 17"><path d="M2 1 V13 M13 1 V13" stroke="#1a8ad0" stroke-width="1.6"/><path d="M2 6 H13" stroke="#1a8ad0" stroke-width="1.2"/><path d="M1 15.5 H14" stroke="#e03030" stroke-width="1.6"/></svg>
<svg class="a" style="left:1190px;top:205px;" width="6" height="4" viewBox="0 0 6 4"><path d="M0 0 H6 L3 4Z" fill="#333"/></svg>
<svg class="a" style="left:1205px;top:199px;" width="18" height="17" viewBox="0 0 18 17"><rect x="1" y="1" width="16" height="12" rx="1" fill="#6a7a90" stroke="#888"/><rect x="2.5" y="2.5" width="13" height="9" fill="#8898b0"/><path d="M2.5 8 Q9 4 15.5 7" stroke="#b8c4d4" stroke-width="1.5" fill="none"/><rect x="5" y="13.5" width="8" height="2.5" fill="#777"/></svg>
<svg class="a" style="left:1227px;top:205px;" width="6" height="4" viewBox="0 0 6 4"><path d="M0 0 H6 L3 4Z" fill="#333"/></svg>
<div class="a" style="left:1243px;top:204px;width:15px;height:6px;background:#111;"></div>
<div class="a" style="left:1268px;top:200px;width:16px;height:15px;background:#bfe0f6;border:1.5px solid #222;"></div>
<svg class="a" style="left:1292px;top:200px;" width="19" height="14" viewBox="0 0 19 14"><path d="M1 6 L11 1.5 L18 5 L8 9.5Z" fill="#5cc0c8"/><path d="M1 6 V9 L8 12.5 L18 8 V5 L8 9.5Z" fill="#3a9ab0"/><path d="M1 9 L8 12.5 L18 8" fill="none" stroke="#9ad8e0" stroke-width="0.8"/></svg>
<svg class="a" style="left:1314px;top:205px;" width="6" height="4" viewBox="0 0 6 4"><path d="M0 0 H6 L3 4Z" fill="#333"/></svg>
<div class="a" style="left:1326px;top:196px;width:115px;height:21px;background:#fff;border:1px solid #c6c6c6;"></div>
<svg class="a" style="left:1332px;top:200px;" width="9" height="15" viewBox="0 0 9 15"><path d="M4.5 1 Q1 1 1 5 Q1 7.5 3 9 V11 H6 V9 Q8 7.5 8 5 Q8 1 4.5 1Z" fill="#fff8c0" stroke="#c8a820" stroke-width="0.9"/><rect x="3" y="11" width="3" height="3" fill="#7a6aa8"/></svg>
<svg class="a" style="left:1347px;top:199px;" width="17" height="17" viewBox="0 0 17 17"><circle cx="8.5" cy="8.5" r="7" fill="#f4d030" stroke="#5a8a40" stroke-width="1.3"/><path d="M2 2 L4 4 M15 2 L13 4 M2 15 L4 13 M15 15 L13 13" stroke="#e0c020" stroke-width="1.3"/></svg>
<div class="t" style="left:1366.4px;top:199.8px;font-size:12px;line-height:14px;color:#111;transform:scaleX(0.892);transform-origin:0 0;">Layer0001</div>
<svg class="a" style="left:1428px;top:203px;" width="7" height="4" viewBox="0 0 7 4"><path d="M0 0 H7 L3.5 4Z" fill="#333"/></svg>
<div class="t" style="left:382.0px;top:366.6px;font-size:18px;line-height:21px;color:#111;transform:scaleX(1.061);transform-origin:0 0;">Total Displacements (mm)</div>
<svg class="a" style="left:382px;top:411px;" width="8" height="398" viewBox="0 0 8 398"><defs><linearGradient id="lg" x1="0" y1="0" x2="0" y2="1">
<stop offset="0" stop-color="#f81a08"/><stop offset="0.1" stop-color="#f46010"/><stop offset="0.2" stop-color="#f8b000"/>
<stop offset="0.27" stop-color="#f8e000"/><stop offset="0.33" stop-color="#c8e000"/><stop offset="0.42" stop-color="#50d000"/>
<stop offset="0.52" stop-color="#18c020"/><stop offset="0.6" stop-color="#10c080"/><stop offset="0.7" stop-color="#08d8d8"/>
<stop offset="0.78" stop-color="#08b0f0"/><stop offset="0.88" stop-color="#1070f0"/><stop offset="1" stop-color="#0810f0"/></linearGradient></defs>
<rect x="0" y="0" width="8" height="399" fill="url(#lg)"/><rect x="0" y="39.5" width="8" height="1" fill="#fff" opacity="0.45"/><rect x="0" y="79.5" width="8" height="1" fill="#fff" opacity="0.45"/><rect x="0" y="119.5" width="8" height="1" fill="#fff" opacity="0.45"/><rect x="0" y="159.5" width="8" height="1" fill="#fff" opacity="0.45"/><rect x="0" y="199.5" width="8" height="1" fill="#fff" opacity="0.45"/><rect x="0" y="239.5" width="8" height="1" fill="#fff" opacity="0.45"/><rect x="0" y="279.5" width="8" height="1" fill="#fff" opacity="0.45"/><rect x="0" y="319.5" width="8" height="1" fill="#fff" opacity="0.45"/><rect x="0" y="359.5" width="8" height="1" fill="#fff" opacity="0.45"/></svg>
<div class="t" style="left:390.5px;top:400.6px;font-size:18px;line-height:21px;color:#111;transform:scaleX(0.935);transform-origin:0 0;">0.01195</div>
<div class="t" style="left:390.5px;top:440.6px;font-size:18px;line-height:21px;color:#111;transform:scaleX(0.974);transform-origin:0 0;">0.01075</div>
<div class="t" style="left:390.5px;top:480.6px;font-size:18px;line-height:21px;color:#111;transform:scaleX(1.007);transform-origin:0 0;">0.009558</div>
<div class="t" style="left:390.5px;top:520.6px;font-size:18px;line-height:21px;color:#111;transform:scaleX(1.052);transform-origin:0 0;">0.008364</div>
<div class="t" style="left:390.5px;top:560.6px;font-size:18px;line-height:21px;color:#111;">0.007169</div>
<div class="t" style="left:390.5px;top:600.6px;font-size:18px;line-height:21px;color:#111;transform:scaleX(1.030);transform-origin:0 0;">0.005974</div>
<div class="t" style="left:390.5px;top:640.6px;font-size:18px;line-height:21px;color:#111;transform:scaleX(1.072);transform-origin:0 0;">0.004779</div>
<div class="t" style="left:390.5px;top:680.6px;font-size:18px;line-height:21px;color:#111;transform:scaleX(1.030);transform-origin:0 0;">0.003584</div>
<div class="t" style="left:390.5px;top:720.6px;font-size:18px;line-height:21px;color:#111;transform:scaleX(1.042);transform-origin:0 0;">0.00239</div>
<div class="t" style="left:390.5px;top:760.6px;font-size:18px;line-height:21px;color:#111;transform:scaleX(0.957);transform-origin:0 0;">0.001195</div>
<div class="t" style="left:390.5px;top:800.6px;font-size:18px;line-height:21px;color:#111;transform:scaleX(0.939);transform-origin:0 0;">0</div>
<svg class="a" style="left:380px;top:825px;" width="95" height="125" viewBox="0 0 95 125"><path d="M83 90.5 V33" stroke="#30b030" stroke-width="1.4"/><path d="M83 18 L86.5 33.5 L79.5 33.5Z" fill="#28a028"/>
<path d="M83 90.5 L30 81.5" stroke="#1010c8" stroke-width="1.5"/><path d="M23 81 L37 75.5 L36 84.5Z" fill="#1010c8"/>
<path d="M83 90.5 L50 103.5" stroke="#e82010" stroke-width="1.4"/><path d="M42 106.5 L53 99 L55 105Z" fill="#e82010"/></svg>
<div class="t" style="left:457.4px;top:826.8px;font-size:16px;line-height:18px;color:#30a030;transform:scaleX(0.890);transform-origin:0 0;">Y</div>
<div class="t" style="left:388.0px;top:897.3px;font-size:18px;line-height:21px;color:#1818c0;transform:scaleX(0.955);transform-origin:0 0;">Z</div>
<div class="t" style="left:410.0px;top:925.9px;font-size:17.5px;line-height:20px;color:#e82010;transform:scaleX(0.925);transform-origin:0 0;">X</div>
<div class="t" style="left:1609.8px;top:229.0px;font-size:17px;line-height:20px;color:#111;transform:scaleX(1.007);transform-origin:0 0;">Model name:Jack support part</div>
<div class="t" style="left:1609.8px;top:248.8px;font-size:17px;line-height:20px;color:#111;transform:scaleX(0.990);transform-origin:0 0;">Task name:Static1</div>
<div class="t" style="left:1609.8px;top:268.6px;font-size:17px;line-height:20px;color:#111;transform:scaleX(1.039);transform-origin:0 0;">Plot type:Static - Total Displacements</div>
<div class="t" style="left:1609.8px;top:288.3px;font-size:17px;line-height:20px;color:#111;transform:scaleX(1.010);transform-origin:0 0;">Coefficient:460.657196</div>
<div class="t" style="left:371.0px;top:1007.2px;font-size:17.5px;line-height:20px;color:#111;transform:scaleX(1.028);transform-origin:0 0;">75.8125mm</div>
<div class="a" style="left:366px;top:1027px;width:1554px;height:22px;background:#e4e5e8;"></div>
<svg class="a" style="left:370px;top:1032px;" width="56" height="10" viewBox="0 0 56 10"><path d="M1.5 1 V9" stroke="#666" stroke-width="1.2"/><path d="M9 1 L3 5 L9 9Z" fill="#666"/><path d="M22 1 L16 5 L22 9Z" fill="#666"/><path d="M31 1 L37 5 L31 9Z" fill="#666"/><path d="M46 1 L52 5 L46 9Z" fill="#666"/><path d="M53.5 1 V9" stroke="#666" stroke-width="1.2"/></svg>
<div class="t" style="left:439.0px;top:1030.2px;font-size:12px;line-height:14px;color:#222;transform:scaleX(1.025);transform-origin:0 0;">Model</div>
<div class="a" style="left:486px;top:1026px;width:58px;height:21px;background:#fafafa;border:1px solid #c9c9c9;border-top:none;"></div>
<div class="t" style="left:497.0px;top:1031.3px;font-size:12px;line-height:14px;color:#222;transform:scaleX(0.927);transform-origin:0 0;">Static1</div>
<div class="a" style="left:365px;top:1050px;width:1555px;height:1px;background:#d0d1d4;"></div>
<div class="t" style="left:6.0px;top:1058.2px;font-size:12px;line-height:14px;color:#333;">Select command or entity.</div>
<div class="a" style="left:1466px;top:1052px;width:1px;height:26px;background:#a0a0a0;"></div>
<svg class="a" style="left:1484px;top:1057px;" width="16" height="15" viewBox="0 0 16 15"><rect x="1" y="1" width="14" height="13" fill="#f0f4fa" stroke="#4a70c0" stroke-width="1"/><rect x="1" y="1" width="14" height="2.5" fill="#4a70c0"/><path d="M3 5 V12" stroke="#4a70c0" stroke-dasharray="1 1"/><path d="M6.5 6 H12.5 M9 6 V12.5" stroke="#8a2a1a" stroke-width="1.6"/></svg>
<svg class="a" style="left:1513px;top:1057px;" width="17" height="15" viewBox="0 0 17 15"><rect x="1" y="1" width="15" height="10" fill="#28a8d8" stroke="#1a78a8"/><rect x="6" y="11" width="5" height="2" fill="#444"/><rect x="4" y="13" width="9" height="1.5" fill="#444"/></svg>
<svg class="a" style="left:1542px;top:1057px;" width="16" height="15" viewBox="0 0 16 15"><rect x="1" y="1" width="14" height="13" fill="#f0f4fa" stroke="#4a70c0" stroke-width="1"/><rect x="1" y="1" width="14" height="2.5" fill="#4a70c0"/><path d="M3.5 6.5 H12.5 M3.5 9 H12.5 M3.5 11.5 H12.5" stroke="#555" stroke-width="0.9"/></svg>
<div class="a" style="left:1569px;top:1054px;width:350px;height:22px;background:#fff;border:1px solid #b8b8b8;"></div>
<div class="a" style="left:1917px;top:194px;width:1px;height:834px;background:#c9c9c9;"></div>
<svg class="a" style="left:0px;top:0px;pointer-events:none;" width="1920" height="1080" viewBox="0 0 1920 1080"><defs>
<linearGradient id="disp" gradientUnits="userSpaceOnUse" x1="1300" y1="473" x2="1044" y2="880"><stop offset="0" stop-color="#0a18d8"/><stop offset="0.12" stop-color="#0a3ce0"/><stop offset="0.24" stop-color="#0888e0"/>
<stop offset="0.33" stop-color="#08b8d8"/><stop offset="0.4" stop-color="#08b090"/><stop offset="0.47" stop-color="#08b010"/>
<stop offset="0.56" stop-color="#60bc00"/><stop offset="0.63" stop-color="#b8c000"/><stop offset="0.69" stop-color="#d8c000"/>
<stop offset="0.8" stop-color="#e07a00"/><stop offset="0.89" stop-color="#e04000"/><stop offset="0.96" stop-color="#e01c00"/><stop offset="1" stop-color="#e01000"/></linearGradient>
<linearGradient id="dispB" gradientUnits="userSpaceOnUse" x1="1300" y1="455" x2="945" y2="847"><stop offset="0" stop-color="#0a18d8"/><stop offset="0.12" stop-color="#0a3ce0"/><stop offset="0.24" stop-color="#0888e0"/>
<stop offset="0.33" stop-color="#08b8d8"/><stop offset="0.4" stop-color="#08b090"/><stop offset="0.47" stop-color="#08b010"/>
<stop offset="0.56" stop-color="#60bc00"/><stop offset="0.63" stop-color="#b8c000"/><stop offset="0.69" stop-color="#d8c000"/>
<stop offset="0.8" stop-color="#e07a00"/><stop offset="0.89" stop-color="#e04000"/><stop offset="0.96" stop-color="#e01c00"/><stop offset="1" stop-color="#e01000"/></linearGradient>
<linearGradient id="mskg" gradientUnits="userSpaceOnUse" x1="0" y1="650" x2="0" y2="770"><stop offset="0" stop-color="#fff" stop-opacity="0"/><stop offset="1" stop-color="#fff" stop-opacity="1"/></linearGradient>
<linearGradient id="dispLA" gradientUnits="userSpaceOnUse" x1="1300" y1="500" x2="1023" y2="940"><stop offset="0" stop-color="#0a18d8"/><stop offset="0.12" stop-color="#0a3ce0"/><stop offset="0.24" stop-color="#0888e0"/>
<stop offset="0.33" stop-color="#08b8d8"/><stop offset="0.4" stop-color="#08b090"/><stop offset="0.47" stop-color="#08b010"/>
<stop offset="0.56" stop-color="#60bc00"/><stop offset="0.63" stop-color="#b8c000"/><stop offset="0.69" stop-color="#d8c000"/>
<stop offset="0.8" stop-color="#e07a00"/><stop offset="0.89" stop-color="#e04000"/><stop offset="0.96" stop-color="#e01c00"/><stop offset="1" stop-color="#e01000"/></linearGradient>
<linearGradient id="mskg2" gradientUnits="userSpaceOnUse" x1="0" y1="540" x2="0" y2="660"><stop offset="0" stop-color="#fff" stop-opacity="0"/><stop offset="1" stop-color="#fff" stop-opacity="1"/></linearGradient>
<mask id="mskL" maskUnits="userSpaceOnUse" x="800" y="400" width="600" height="520"><rect x="800" y="400" width="600" height="520" fill="url(#mskg2)"/></mask>
<mask id="mskB" maskUnits="userSpaceOnUse" x="800" y="400" width="600" height="520"><rect x="800" y="400" width="600" height="520" fill="url(#mskg)"/></mask>
<linearGradient id="dispL" gradientUnits="userSpaceOnUse" x1="990" y1="326" x2="812" y2="831"><stop offset="0" stop-color="#0a18d8"/><stop offset="0.12" stop-color="#0a3ce0"/><stop offset="0.24" stop-color="#0888e0"/>
<stop offset="0.33" stop-color="#08b8d8"/><stop offset="0.4" stop-color="#08b090"/><stop offset="0.47" stop-color="#08b010"/>
<stop offset="0.56" stop-color="#60bc00"/><stop offset="0.63" stop-color="#b8c000"/><stop offset="0.69" stop-color="#d8c000"/>
<stop offset="0.8" stop-color="#e07a00"/><stop offset="0.89" stop-color="#e04000"/><stop offset="0.96" stop-color="#e01c00"/><stop offset="1" stop-color="#e01000"/></linearGradient>
<linearGradient id="bore1" gradientUnits="userSpaceOnUse" x1="0" y1="646" x2="0" y2="766"><stop offset="0" stop-color="#98b800"/><stop offset="0.55" stop-color="#a0b010"/><stop offset="0.8" stop-color="#d8c000"/><stop offset="1" stop-color="#f0b000"/></linearGradient>
<linearGradient id="bore2" gradientUnits="userSpaceOnUse" x1="0" y1="702" x2="0" y2="822"><stop offset="0" stop-color="#b0b800"/><stop offset="0.55" stop-color="#a0a820"/><stop offset="0.8" stop-color="#d8c000"/><stop offset="1" stop-color="#f0b000"/></linearGradient>
<linearGradient id="band" gradientUnits="userSpaceOnUse" x1="830" y1="0" x2="1360" y2="0">
<stop offset="0" stop-color="#0c44c8"/><stop offset="0.12" stop-color="#0830c8"/><stop offset="0.28" stop-color="#0a44d4"/>
<stop offset="0.4" stop-color="#0a78dc"/><stop offset="0.5" stop-color="#0a94e0"/><stop offset="0.6" stop-color="#0878e0"/>
<stop offset="0.76" stop-color="#0844d8"/><stop offset="1" stop-color="#0820c8"/></linearGradient>
<radialGradient id="topg" gradientUnits="userSpaceOnUse" cx="860" cy="368" r="190" fx="845" fy="372">
<stop offset="0" stop-color="#1670e4"/><stop offset="0.45" stop-color="#0c38e0"/><stop offset="1" stop-color="#0a1ae2"/></radialGradient>
<linearGradient id="shadeL" gradientUnits="userSpaceOnUse" x1="0" y1="455" x2="0" y2="840">
<stop offset="0" stop-color="#000" stop-opacity="0.12"/><stop offset="1" stop-color="#000" stop-opacity="0.12"/></linearGradient>
</defs><path d="M 883,430 L 1045,430 L 1041,560 L 1030,645 L 1012,720 L 1010,800 L 1000,826 C 980,836 955,841 931,840 C 900,836 868,812 850,786 C 833,760 826,730 828,700 C 830,672 842,645 853,620 C 866,590 872,560 876,520 Z" fill="url(#dispLA)"/><path d="M 883,430 L 1045,430 L 1041,560 L 1030,645 L 1012,720 L 1010,800 L 1000,826 C 980,836 955,841 931,840 C 900,836 868,812 850,786 C 833,760 826,730 828,700 C 830,672 842,645 853,620 C 866,590 872,560 876,520 Z" fill="url(#dispL)" mask="url(#mskL)"/><path d="M 883,430 L 903,430 C 900,500 895,545 890,565 C 882,600 872,630 862,652 C 850,680 845,700 846,725 C 847,760 862,790 885,812 C 905,828 925,834 940,838 L 931,840 C 900,836 868,812 850,786 C 833,760 826,730 828,700 C 830,672 842,645 853,620 C 866,590 872,560 876,520 Z" fill="url(#dispLA)"/><path d="M 883,430 L 903,430 C 900,500 895,545 890,565 C 882,600 872,630 862,652 C 850,680 845,700 846,725 C 847,760 862,790 885,812 C 905,828 925,834 940,838 L 931,840 C 900,836 868,812 850,786 C 833,760 826,730 828,700 C 830,672 842,645 853,620 C 866,590 872,560 876,520 Z" fill="url(#dispL)" mask="url(#mskL)"/><path d="M 883,430 L 903,430 C 900,500 895,545 890,565 C 882,600 872,630 862,652 C 850,680 845,700 846,725 C 847,760 862,790 885,812 C 905,828 925,834 940,838 L 931,840 C 900,836 868,812 850,786 C 833,760 826,730 828,700 C 830,672 842,645 853,620 C 866,590 872,560 876,520 Z" fill="#000" opacity="0.08"/><path d="M 956,646 C 975,646 998,680 998,712 C 996,745 975,766 950,766 C 925,766 910,740 910,712 C 910,685 938,646 956,646 Z" fill="url(#bore1)"/><path d="M 956,646 C 968,647 982,675 982,700 C 982,735 960,758 936,758 C 920,758 910,738 910,712 C 910,685 938,646 956,646 Z" fill="#fff"/><path d="M 1041,430 L 1301,430 L 1301,453 C 1300,490 1296,530 1291,560 C 1286,590 1278,630 1270,660 C 1262,685 1250,715 1241,740 C 1230,768 1218,797 1209,815 C 1200,832 1185,855 1170,871 C 1155,885 1130,897 1099,898 C 1070,898 1040,890 1022,873 C 1005,857 997,840 995,822 C 988,790 988,752 993,722 C 1003,690 1018,655 1025,620 C 1035,570 1039,520 1041,430 Z" fill="url(#disp)"/><path d="M 1041,430 L 1301,430 L 1301,453 C 1300,490 1296,530 1291,560 C 1286,590 1278,630 1270,660 C 1262,685 1250,715 1241,740 C 1230,768 1218,797 1209,815 C 1200,832 1185,855 1170,871 C 1155,885 1130,897 1099,898 C 1070,898 1040,890 1022,873 C 1005,857 997,840 995,822 C 988,790 988,752 993,722 C 1003,690 1018,655 1025,620 C 1035,570 1039,520 1041,430 Z" fill="url(#dispB)" mask="url(#mskB)"/><path d="M 1041,430 L 1058,430 C 1056,520 1053,570 1046,610 C 1038,650 1025,690 1014,720 C 1006,750 1006,790 1014,825 C 1024,858 1050,885 1085,897 C 1060,896 1035,887 1022,873 C 1005,857 997,840 995,822 C 988,790 988,752 993,722 C 1003,690 1018,655 1025,620 C 1035,570 1039,520 1041,430 Z" fill="url(#disp)"/><path d="M 1041,430 L 1058,430 C 1056,520 1053,570 1046,610 C 1038,650 1025,690 1014,720 C 1006,750 1006,790 1014,825 C 1024,858 1050,885 1085,897 C 1060,896 1035,887 1022,873 C 1005,857 997,840 995,822 C 988,790 988,752 993,722 C 1003,690 1018,655 1025,620 C 1035,570 1039,520 1041,430 Z" fill="url(#dispB)" mask="url(#mskB)"/><path d="M 1041,430 L 1058,430 C 1056,520 1053,570 1046,610 C 1038,650 1025,690 1014,720 C 1006,750 1006,790 1014,825 C 1024,858 1050,885 1085,897 C 1060,896 1035,887 1022,873 C 1005,857 997,840 995,822 C 988,790 988,752 993,722 C 1003,690 1018,655 1025,620 C 1035,570 1039,520 1041,430 Z" fill="#000" opacity="0.07"/><path d="M 1114,702 C 1135,702 1157,735 1157,758 C 1157,795 1132,822 1102,822 C 1080,822 1071,798 1071,772 C 1071,742 1097,702 1114,702 Z" fill="url(#bore2)"/><path d="M 1114,702 C 1127,703 1139,730 1139,755 C 1139,790 1118,815 1092,815 C 1078,815 1071,795 1071,772 C 1071,742 1097,702 1114,702 Z" fill="#fff"/><path d="M 830,372 L 830,412 C 832,432 850,447 884,457 C 920,467 990,472 1095,472 C 1200,472 1270,464 1300,453 C 1340,440 1359,430 1360,419 L 1360,372 Z" fill="url(#band)"/><path d="M 830,372 A 265 63 0 0 1 1360,372 L 1360,384 A 265 33 0 0 1 830,384 Z" fill="url(#topg)"/><path d="M 921,377 A 175 43 0 0 1 1271,377" fill="none" stroke="#0610b0" stroke-width="2.2" opacity="0.55"/><path d="M 923,380 A 173 41 0 0 1 1269,380" fill="none" stroke="#1a30ff" stroke-width="1.5" opacity="0.35"/><path d="M 989,381 A 107 30 0 0 0 1203,381" fill="none" stroke="#0610c0" stroke-width="1.2" opacity="0.35"/><ellipse cx="1096" cy="373" rx="76" ry="18" fill="#0612dc"/><path d="M 1020,373 A 76 18 0 0 1 1172,373" fill="none" stroke="#0408b8" stroke-width="2" opacity="0.5"/></svg>
</body></html>
